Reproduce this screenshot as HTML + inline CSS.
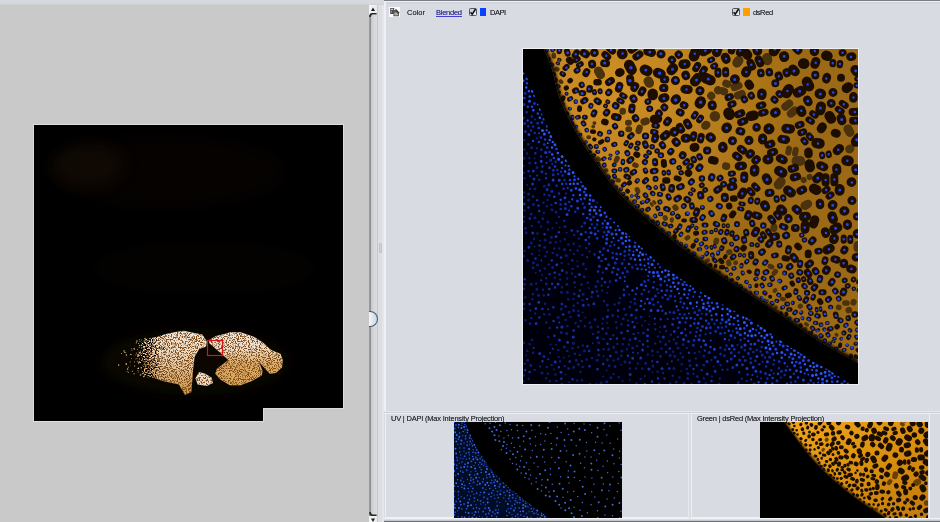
<!DOCTYPE html>
<html><head><meta charset="utf-8">
<style>
*{margin:0;padding:0;box-sizing:border-box}
html,body{width:940px;height:522px;overflow:hidden;background:#d8dbe2;font-family:"Liberation Sans",sans-serif}
.a{position:absolute}
svg{display:block}
#left{left:0;top:0;width:369px;height:522px;background:#c9c9c9}
#ltop{left:0;top:0;width:369px;height:6px;background:linear-gradient(#d6d9e0 0,#d6d9e0 3px,#d0d1d4 4px,#c9c9c9 6px)}
#ov{left:34px;top:125px;width:309px;height:296px;background:#000;box-shadow:0 0 0 1px #dcdcdc}
#notch{left:264px;top:409px;width:80px;height:13px;background:#c9c9c9}
#sb{left:369px;top:0;width:9px;height:522px;background:#d4d5d8}
#rp{left:384px;top:0;width:556px;height:522px;background:#d8dbe2}
.t{position:absolute;font-size:7.5px;color:#2c2c34;white-space:nowrap;line-height:1;text-shadow:0 0 .25px #666;will-change:transform}
</style></head><body>
<div class="a" id="left"></div>
<div class="a" id="ov"><svg width="309" height="296" viewBox="0 0 309 296" style="position:absolute;left:0;top:0">
<defs>
<linearGradient id="lg" gradientUnits="userSpaceOnUse" x1="94" y1="0" x2="138" y2="0"><stop offset="0" stop-color="#000"/><stop offset="1" stop-color="#fff"/></linearGradient>
<filter id="thr" x="0" y="0" width="1" height="1" color-interpolation-filters="sRGB"><feTurbulence type="fractalNoise" baseFrequency="0.85" numOctaves="1" seed="2" result="n"/><feColorMatrix in="n" type="matrix" values="1 0 0 0 0 1 0 0 0 0 1 0 0 0 0 0 0 0 0 1" result="g"/><feComposite in="SourceGraphic" in2="g" operator="arithmetic" k1="0" k2="1" k3="1.6" k4="-0.8" result="s"/><feComponentTransfer in="s"><feFuncR type="linear" slope="5" intercept="-2"/><feFuncG type="linear" slope="5" intercept="-2"/><feFuncB type="linear" slope="5" intercept="-2"/></feComponentTransfer></filter>
<linearGradient id="cg" gradientUnits="userSpaceOnUse" x1="0" y1="206" x2="0" y2="265"><stop offset="0" stop-color="#f6ece2"/><stop offset=".45" stop-color="#ead6bc"/><stop offset="1" stop-color="#d09a50"/></linearGradient>
<linearGradient id="rg" gradientUnits="userSpaceOnUse" x1="0" y1="206" x2="0" y2="261"><stop offset="0" stop-color="#f6ece6"/><stop offset=".35" stop-color="#ecdcc8"/><stop offset=".6" stop-color="#dcac68"/><stop offset="1" stop-color="#d8a860"/></linearGradient>
<filter id="b2" x="-.2" y="-.5" width="1.4" height="2"><feGaussianBlur stdDeviation="8"/></filter>
<filter id="spk" x="0" y="0" width="1" height="1" color-interpolation-filters="sRGB">
<feTurbulence type="fractalNoise" baseFrequency="1.1" numOctaves="1" seed="5" result="n"/>
<feColorMatrix in="n" type="matrix" values="0 0 0 0 0.5 0 0 0 0 0.3 0 0 0 0 0.1 -8 0 0 0 4.2" result="c"/>
<feComposite in="c" in2="SourceAlpha" operator="in" result="d"/>
<feMerge><feMergeNode in="SourceGraphic"/><feMergeNode in="d"/></feMerge>
<feGaussianBlur stdDeviation=".4"/>
</filter>
<filter id="b6"><feGaussianBlur stdDeviation=".45"/></filter>
<mask id="fm" maskUnits="userSpaceOnUse" x="0" y="0" width="309" height="296"><rect width="309" height="296" fill="url(#lg)" filter="url(#thr)"/></mask>
</defs>
<ellipse cx="131" cy="47" rx="120" ry="36" fill="#1a1006" opacity=".22" filter="url(#b2)"/>
<ellipse cx="54" cy="40" rx="36" ry="22" fill="#2a1a08" opacity=".28" filter="url(#b2)"/>
<ellipse cx="171" cy="143" rx="110" ry="24" fill="#140c04" opacity=".22" filter="url(#b2)"/>
<ellipse cx="161" cy="237" rx="95" ry="34" fill="#140b03" opacity=".5" filter="url(#b2)"/>
<g filter="url(#b6)" fill="none"><path d="M92 238.6h0M100.5 236.9h0M113.7 243.5h0M109.6 224.6h0M105.7 214.7h0M112.7 234.3h0M94.3 247.3h0M87.4 228.5h0M103.7 236.3h0M111.6 249.5h0M91.7 227.4h0M103.6 230.2h0M111.6 236.2h0M90.6 227.6h0M107 249.2h0M94.3 242.2h0M113.3 243.6h0M98.6 246.3h0M102.9 233.6h0M96.2 237h0M114.9 228.5h0M106.3 226.1h0M97.9 225.1h0M110.7 250.8h0" stroke="#d8b888" stroke-width="1" stroke-linecap="round"/><path d="M92.4 229.9h0M102.9 215.9h0M109.6 248h0M104.2 229.7h0M112.7 219h0M100.4 224h0M114.1 239.3h0M104 231.3h0M111 213.4h0M107.3 242.7h0M93.6 243.9h0M115.9 235.2h0M105.5 237h0M107.7 220.2h0M90.1 226h0M111.4 243.7h0M111.8 240.1h0M111.5 241.1h0M96.9 229.5h0M110.4 222.1h0M105.3 227.8h0M106.2 227.5h0M104.6 237.9h0M92.4 239.3h0M84.6 240.1h0M109.8 222.6h0M105.6 220.4h0M109.8 251.6h0" stroke="#d8b888" stroke-width="1.5" stroke-linecap="round"/><path d="M103.4 230h0M113.9 252.6h0M97.6 233.5h0M102 229.2h0M113.6 215.6h0M109.2 216h0M115.3 239.5h0M106 249.9h0M105.7 216.3h0M93.2 246.6h0M110.8 245.8h0M114.4 234.4h0M114.3 217.4h0M104.8 246h0M115.6 236.3h0M112.1 233.7h0M105.3 233.5h0M110.5 236.9h0M107.4 215h0M110.6 226h0M109.8 226.1h0" stroke="#a87838" stroke-width="1" stroke-linecap="round"/><path d="M111.7 215.3h0M100.1 248.8h0M110.4 224.6h0M102.4 217.8h0M115 226.7h0M106 228.2h0M115.5 215.7h0M110.2 239.6h0M106.6 250.2h0M100.6 241.1h0" stroke="#a87838" stroke-width="1.5" stroke-linecap="round"/></g>
<g filter="url(#spk)">
<path d="M90 226 99 218 112 214 122 212 132 209 140.4 207.3 149.6 205.7 158 207.5 160.6 208 168.3 209.6 172.9 216.5 172 221.8 165.2 224.1 160.6 231.8 159 245.6 158 259 157.3 267 151 270 145 259.4 129.7 256.3 106.7 248.7 91.3 247Z" fill="url(#cg)" mask="url(#fm)"/>
<path d="M165.2 247.1 171.3 248.7 177.5 252.5 179 257.9 172.9 261 163.7 259.4 161.4 253.3Z" fill="#ecdcc8"/>
<path d="M175.2 215 182 211 191.3 208.8 195.9 207.3 206.6 207.3 220.4 211.9 229.6 218 235.8 224.1 238.8 225.7 246.5 228.7 248.8 234.9 248 242.5 241.9 247.9 235.8 248.7 232.7 245.6 225 237 228.5 245.5 228 250.2 217.3 256.3 206.6 260.2 195.9 260.2 186.7 254.8 181.3 248.7 182.8 244 194.3 234.9 188.2 229.5 175.2 218Z" fill="url(#rg)"/>
</g>
<rect x="173.5" y="215.5" width="15" height="15" fill="none" stroke="#d41818" stroke-width="1.2"/>
</svg></div>
<div class="a" id="notch"></div>
<div class="a" style="left:263px;top:408px;width:81px;height:1px;background:#dcdcdc"></div>
<div class="a" style="left:263px;top:408px;width:1px;height:14px;background:#dcdcdc"></div>
<!-- scrollbar -->
<div class="a" id="sb"></div>
<div class="a" style="left:369px;top:4px;width:2px;height:518px;background:linear-gradient(90deg,#a0a0a2,#8a8a8c)"></div>
<div class="a" style="left:371px;top:4px;width:6px;height:518px;background:linear-gradient(90deg,#c8c9cc,#d6d7da 50%,#dcdde0)"></div>
<div class="a" style="left:377px;top:0;width:1px;height:522px;background:#c6c8cd"></div>
<div class="a" style="left:369px;top:5px;width:8px;height:10px;background:linear-gradient(90deg,#f4f5f7,#e8eaec)"></div>
<svg class="a" style="left:369px;top:5px" width="8" height="10" viewBox="0 0 8 10"><path d="M2 6L4 2.4 6 6Z" fill="#1a1a1a"/></svg>
<svg class="a" style="left:369px;top:12px" width="8" height="5" viewBox="0 0 8 5"><path d="M0.3 5V3.2Q0.8 1 3 1H7.6V2.6H3.6Q2 2.8 1.8 5Z" fill="#262626"/></svg>
<svg class="a" style="left:369px;top:512px" width="8" height="5" viewBox="0 0 8 5"><path d="M0.3 0V1.8Q0.8 4 3 4H7.6V2.4H3.6Q2 2.2 1.8 0Z" fill="#262626"/></svg>
<div class="a" style="left:369px;top:516px;width:8px;height:6px;background:linear-gradient(90deg,#f4f5f7,#e8eaec)"></div>
<svg class="a" style="left:369px;top:516px" width="8" height="6" viewBox="0 0 8 6"><path d="M2 2.4L4 6 6 2.4Z" fill="#1a1a1a"/></svg>
<div class="a" id="ltop2" style="left:0;top:0;width:384px;height:5px;background:linear-gradient(#d6d9e0 0,#d6d9e0 3px,#d2d4d8 4px,#cfd0d2 5px)"></div>
<!-- splitter -->
<div class="a" style="left:378px;top:5px;width:4px;height:517px;background:#dcdee2"></div>
<div class="a" style="left:382px;top:5px;width:2px;height:517px;background:#e4e6ea"></div>
<div class="a" style="left:379px;top:243px;width:3px;height:10px;border-radius:2px;background:#d2d4d8;box-shadow:inset 0 0 0 1px #bfc2c8"></div>
<div class="a" style="left:369px;top:311px;width:9px;height:16px;border-radius:0 8px 8px 0;background:linear-gradient(90deg,#f2f7fc,#c4d6ea);border:1px solid #50566a;border-left:none"></div>
<!-- right panel -->
<div class="a" id="rp"></div>
<div class="a" style="left:384px;top:0;width:556px;height:1px;background:#7a7d85"></div>
<div class="a" style="left:384px;top:1px;width:556px;height:1px;background:#eef0f4"></div>
<div class="a" style="left:384px;top:2px;width:556px;height:2px;background:#d2d5db"></div>
<div class="a" style="left:384px;top:1px;width:2px;height:411px;background:#eef0f3"></div>
<!-- toolbar -->
<div class="a" style="left:389px;top:7px;width:11px;height:10px;background:#fbfbfb"></div>
<svg class="a" style="left:389px;top:7px" width="11" height="10" viewBox="0 0 11 10"><rect x="1.2" y="1" width="4" height="6" fill="#4a4a4a"/><rect x="2" y="1.8" width="2.2" height="1.2" fill="#d0d0d0"/><rect x="2" y="3.8" width="1" height="2" fill="#888"/><path d="M4.4 3H7.2L10 6V9.2H4.4Z" fill="#5a5a5a"/><path d="M5.4 5.6H7.4L9 7.2V8.2H5.4Z" fill="#b0b0b0"/><path d="M6.6 2.4L10.2 6.2" stroke="#2a2a2a" stroke-width="1.1"/></svg>
<div class="t" style="left:407px;top:9px">Color</div>
<div class="t" style="left:436px;top:9px;color:#3030c0;letter-spacing:-0.25px">Blended</div><div class="a" style="left:436px;top:15.5px;width:25.5px;height:1px;background:#4040c8"></div>
<div class="a" style="left:469px;top:8px;width:8px;height:8px;background:linear-gradient(135deg,#c4ccd8,#eef1f5);border:1px solid #4e5566;border-radius:1.5px"></div>
<svg class="a" style="left:469px;top:8px" width="8" height="8" viewBox="0 0 8 8"><path d="M1.6 4.2L3.2 6.2 6.6 1" stroke="#0a0a0a" stroke-width="1.5" fill="none"/></svg>
<div class="a" style="left:480px;top:8px;width:6px;height:8px;background:#0844ff"></div>
<div class="t" style="left:489.5px;top:9px;letter-spacing:-0.45px">DAPI</div>
<div class="a" style="left:732px;top:8px;width:8px;height:8px;background:linear-gradient(135deg,#c4ccd8,#eef1f5);border:1px solid #4e5566;border-radius:1.5px"></div>
<svg class="a" style="left:732px;top:8px" width="8" height="8" viewBox="0 0 8 8"><path d="M1.6 4.2L3.2 6.2 6.6 1" stroke="#0a0a0a" stroke-width="1.5" fill="none"/></svg>
<div class="a" style="left:743px;top:8px;width:7px;height:8px;background:#ffa000"></div>
<div class="t" style="left:752.5px;top:9px;letter-spacing:-0.4px">dsRed</div>
<!-- main image -->
<div class="a" style="left:522px;top:48px;width:337px;height:337px;background:#eef0f4"></div>
<div class="a" style="left:523px;top:49px"><svg width="335" height="335" viewBox="0 0 335 335">
<defs>
<radialGradient id="og" gradientUnits="userSpaceOnUse" cx="85" cy="40" r="200"><stop offset="0" stop-color="#d09020"/><stop offset=".4" stop-color="#c08420"/><stop offset="1" stop-color="#9c6a14"/></radialGradient>
<filter id="bl" x="0" y="0" width="1" height="1"><feGaussianBlur stdDeviation=".6"/></filter><filter id="bf"><feGaussianBlur stdDeviation="1.5"/></filter>
<clipPath id="oc"><path d="M21 0 22.4 3.4 24.5 8.1 26.8 13.8 29 20 30.8 26.7 32.5 34.2 34.4 42.1 37 50 40.3 58.1 44.2 66.4 48.5 74.8 53 83 57.9 91.1 63.1 99.2 68.5 107.2 74 115 79.4 122.7 84.9 130.3 90.7 137.8 97 145 104.2 152.2 112.2 159.3 120 166 127 172 132.9 177.2 138.2 181.7 142.9 185.6 147 189 149.5 191.1 150.8 192.2 152.6 193.7 157 197 165 202.9 175.5 210.6 186.7 218.8 197 226 205.9 232 214.4 237.4 222.7 242.7 231 248 239.3 253.5 247.6 259 255.8 264.5 264 270 271.9 275.5 279.6 281 287.5 286.5 296 292 306.2 298 317.5 304.4 327.8 310 335 314 335 0Z"/></clipPath>
<clipPath id="bc"><path d="M0 19 1.8 23.2 4.4 29.1 7.3 35.8 10 42 12.2 47.4 14.3 52.6 16.5 58 19 64 21.8 70.8 24.9 78.1 28.2 85.6 32 93 36.4 100.4 41.2 107.9 46.2 115.2 51 122 55.3 128.2 59.5 133.9 63.7 139.4 68 145 72.4 150.5 76.8 155.9 81.5 161.5 87 167.5 93.7 174.4 101.4 182 109.1 189.4 116 196 121.8 201.5 126.9 206.3 131.8 210.7 137 215 142.6 219.2 148.4 223.2 154.2 227.1 160 231 165.2 234.5 169.9 237.8 175.5 241.4 183 246 193.6 252 206.4 259 219.5 266.2 231 273 240.3 279.1 248.5 285 256.2 290.6 264 296 272.1 301 280.1 305.7 288 310.3 296 315 304.8 320.4 314 326.2 322.2 331.4 328 335 0 335Z"/></clipPath>
</defs>
<rect width="335" height="335" fill="#000"/>
<g filter="url(#bl)" fill="none">
<g clip-path="url(#bc)"><rect width="335" height="335" fill="#01020a"/><path d="M135 214.9h0M132 218.8h0M87.5 169.8h0M285.4 325.6h0M74.6 153.3h0M165.6 245.2h0M126.1 218.6h0M233.2 281h0M253.4 292.6h0M144.1 236.3h0M82 171.7h0M200 255.7h0M281.8 324.6h0M170.3 247.6h0M18.8 65.5h0M123.1 205.4h0M110.5 202.5h0M137 218.3h0" stroke="#1a40d8" stroke-width="2" stroke-linecap="round"/><path d="M125.2 210.3h0M171.7 243.1h0M235.5 291.6h0M146 231h0M11.2 46.7h0M106.4 201.3h0M262.1 305.7h0M83.4 167.8h0M11.5 54.5h0M61.2 142.9h0M179.1 250.9h0M164.4 248.9h0M213.4 279.6h0M46.9 131.1h0M256.8 295.8h0M226.8 270.6h0M19.1 73.5h0M57.9 150.2h0M273.2 313h0M30.9 109.1h0M142.4 227.8h0M95.1 177h0M112.3 193.5h0M46.4 120.7h0M117.5 215.8h0M309.1 332.7h0M61.6 149.6h0M14.8 64.4h0M186.2 257.1h0M211.5 262.1h0M236.1 283.9h0M23.7 81.2h0M239.2 293h0M24.1 77.2h0M303.5 319.9h0M321.5 332.2h0M221.2 279.3h0M210.6 275.3h0M266.3 308.3h0M250.4 296.7h0M68.6 157.9h0M9 57.8h0M130.7 227.2h0M3.9 34.3h0M33.4 100h0M215 271.9h0M277.7 318.6h0M131 211.4h0M235.2 276.5h0M45.8 116.9h0M324.7 334.7h0M125.4 214.5h0M79.7 174.5h0M170 239.7h0M20.6 70.3h0M147.6 237.8h0M163.6 235.9h0" stroke="#1a40d8" stroke-width="2.5" stroke-linecap="round"/><path d="M155.5 234.1h0M154 228.4h0M271.6 316.8h0M264.3 300.8h0M184.9 253.8h0M252.8 300.3h0M3.9 29.8h0M99.7 194.2h0M187 261.9h0M276.2 308.3h0M299.6 333.9h0M58.6 132.8h0M159.9 235.4h0M134.4 223.2h0M89 185h0M70.3 151.6h0M293.5 321.5h0M193.3 265.2h0M308.8 328.8h0M205.9 270.7h0M280.3 311.5h0M260.2 297h0M51.5 130.8h0M103.4 184.5h0M81.9 163.8h0M85.5 182.8h0M199.2 270.4h0M111.8 197.6h0M161.8 232.6h0M269.9 309.8h0M278.3 305.2h0M306.3 326h0M276.8 313.9h0M203.2 273.1h0M59.8 137.3h0M83.7 178.4h0M247.8 285h0M150.7 229.4h0M318.9 334.8h0M285.6 311.5h0" stroke="#1a40d8" stroke-width="3" stroke-linecap="round"/><path d="M90.6 188.9h0M24.8 94.2h0M156 244.5h0M173.7 257.5h0M189 253.8h0M42.4 116.4h0M268.5 299.2h0M188.6 266.4h0M215.4 275.9h0M176.5 247.8h0M141.6 232.2h0M289.1 321.1h0M91.2 173.5h0M38.9 119h0M95.5 191.6h0M121.6 216.5h0M51.4 127.2h0M167.4 236.9h0M106.7 187.3h0M0.5 24.4h0M92.7 181.3h0M158.2 230.5h0M14.8 55.6h0M121.4 210.5h0M103 198.1h0M245.8 295.8h0M311.8 327.2h0M123 220.8h0" stroke="#2a58f8" stroke-width="2" stroke-linecap="round"/><path d="M26.7 91h0M29.2 105.5h0M199.5 260.1h0M290.3 314.1h0M232.3 286.2h0M204.7 265.2h0M3.3 38.4h0M194.7 258.1h0M117.1 211h0M298.3 318.1h0M302.4 327.2h0M96.4 181h0M29.7 93h0M277.8 322.8h0M248.9 288.2h0M199.1 266.4h0M55.5 129.7h0M295.4 329.4h0M10.3 61.3h0M6.7 47.6h0M110.2 206.1h0M194 254.6h0M221.9 284.3h0M42.1 122.4h0M115.8 206.7h0M287.3 316.9h0M118.9 199.2h0M150.3 233.8h0M161.5 240.3h0M178.1 243.2h0M314.4 332.4h0M93.3 185.3h0M103.3 188.1h0M214.7 266.7h0M47.2 135.1h0M74.6 171.2h0M271.8 305.9h0M76.7 161.4h0M112 210.4h0M67.2 146.5h0M206.7 275.1h0M16.8 68.7h0M173.9 253.5h0M220.1 268.6h0M211.3 269.1h0M269.1 313.6h0M106.6 197.5h0M113.9 201.1h0M72.7 158h0M315.6 327.4h0M241.6 288.7h0M56.9 146h0M17 60.5h0M66.5 154.8h0M258.7 308.7h0M151.7 237.7h0M254.1 303.9h0M126.4 222.9h0M290.8 317.9h0M223.9 276.4h0M139.1 222.9h0M182.2 247h0M145.8 222h0M29 98.6h0M225 286.4h0M87.6 178.4h0M281.9 315.3h0M67 150.8h0M34.9 104h0M142.4 221.5h0M117.2 203.4h0M154.6 239.9h0M78 157.8h0M229.9 280h0M54.6 134.8h0M52.9 139.5h0M204.4 259.9h0M106.4 191.5h0M50.8 134.8h0M0.3 31.7h0M161.3 245.5h0M26.3 83.6h0M166.6 241.2h0M238.5 287.1h0M5.9 42.3h0M102.8 192h0M38.8 113.4h0M115.9 197.6h0M73.2 164.5h0M183.6 260.3h0M180.6 254.8h0M207.9 267.8h0" stroke="#2a58f8" stroke-width="2.5" stroke-linecap="round"/><path d="M45.8 124.8h0M167.4 254.2h0M21.4 84.9h0M293.2 325.8h0M302.1 323.2h0M268.1 304.9h0M298.1 324.5h0M294 316.7h0M217.2 279.7h0M63.1 146.1h0M129.1 215.4h0M244 286.1h0M9.4 42.3h0M245.1 292.1h0M303.9 332.1h0M180.2 258.5h0M227 282.1h0M190.4 259.6h0M137.7 230.1h0M28 87.4h0M185.9 248.9h0M19.5 81.5h0M221.4 273.6h0M77.8 166.1h0M264.8 296.6h0M39.2 107.6h0M6.5 52.3h0M32 95.7h0M242.9 298.8h0M281.3 308.1h0M241.7 281.4h0M99.6 184.3h0M207 261.9h0M35.6 110.2h0M258.9 303.6h0M67 161.2h0M56.7 140.8h0M145.5 225.7h0M43.2 111.6h0M247 299.9h0M84.8 174.6h0M127.9 207.9h0M135.5 226.7h0M98.4 188.9h0M223.7 269.2h0M130.5 223.5h0M228.4 273.9h0M119.7 205.6h0M299.5 330.3h0M271.5 301.3h0M309.6 324h0M150.4 225.7h0M284 320.7h0M228.7 286.7h0M289.5 326.4h0M257.6 292.5h0M306.5 322.1h0M275.5 303.3h0M62.5 139.5h0M71.4 161.3h0M249 293.4h0M50.1 123.5h0M238.1 279.3h0" stroke="#2a58f8" stroke-width="3" stroke-linecap="round"/><path d="M234.4 327.5h0M113 215.9h0M257.7 328.6h0M182.5 285.2h0M238.2 329.5h0M209.7 282h0M239.6 312.8h0M214.6 296h0M43 144.5h0M206.1 291h0M79.6 178.5h0M144.7 270.1h0M14 89.4h0M11.8 70.4h0M101.2 210.8h0M106 245.6h0M264.3 317.4h0M23.8 107.9h0M14 99.2h0M29.3 114.9h0M135.4 244h0M178.8 264.7h0M66.6 202.4h0M250.7 324.6h0" stroke="#102ca0" stroke-width="2" stroke-linecap="round"/><path d="M75.2 182h0M8.1 81.6h0M139.5 248.5h0M150.4 270h0M233.7 301.1h0M40.6 139.7h0M221.7 289.4h0M3.6 63.3h0M81.1 183.3h0M59.8 154.8h0M78.5 212.1h0M112.9 245h0M89.6 203.9h0M232.4 311.7h0M250.6 315.4h0M37.7 159.9h0M203 277.4h0M187.3 284.1h0M8.9 67.5h0M80.7 199.5h0M87.3 196.9h0M242.2 308.5h0M134.3 240.2h0M202.1 300.7h0M33.6 136.8h0M156.8 265.2h0M197.5 304.9h0M244.3 329.4h0M272.4 332.5h0M162.9 286.4h0M36 144.5h0M80.1 187.7h0M224.6 325.4h0M111.7 249.9h0M54.7 182.2h0M146.8 263.3h0M52.3 162.8h0M106 205.6h0M248.2 321.3h0M171.8 269.9h0M134.9 253.2h0M34.3 121h0M23 129.3h0M18.3 100.7h0M154.8 269h0M19.5 117.5h0M243.2 317.4h0M130.6 255.8h0M102.1 219.1h0M121.1 241.1h0M118.7 220.2h0M137.7 270.2h0M167.4 283.6h0M131 232.9h0M217.7 291.1h0M216.2 323.3h0M8.6 98.7h0M201.4 306.8h0M255.8 319.2h0M238.7 297.9h0M18.1 107.6h0M118.8 245.1h0M261.7 325.9h0M159.8 258.3h0M125.4 231.2h0M236.3 315.3h0M5.3 77.3h0M162.5 273.6h0M290.7 334.2h0M71.6 205.4h0M62.6 183.3h0M70.6 167.9h0M109.3 218.6h0M100.9 240.8h0M139.4 261.7h0M155.2 261.3h0M198.9 278.5h0M12.4 104.2h0M215.8 303.4h0M151.8 247.4h0M125.8 242.8h0M39.5 126.6h0M203.5 296.6h0M176.9 286.4h0M220.3 307.8h0M66.1 194.7h0M227.7 309.4h0M11.7 83.9h0M101.9 227.9h0M88.7 192.9h0M32.6 112.8h0M37.6 155.4h0M66 188.3h0M155.4 278.8h0M35.1 124.9h0M230.3 302.9h0M267.9 333.4h0M201.9 283.9h0M211.9 288.8h0M161.7 265.5h0M197.4 298.7h0M41.5 130.9h0M174.4 279h0M181.8 301.6h0M46.2 153.1h0M270.8 324.8h0M10 77.4h0M170.2 259.3h0M43.2 134.8h0M74.1 175.5h0M285.4 334.8h0M101.7 206.8h0M221.8 301.3h0M38.1 122.7h0M197.7 274.3h0M237.6 302.4h0" stroke="#102ca0" stroke-width="2.5" stroke-linecap="round"/><path d="M256.1 312.6h0M71.9 178.9h0M171.7 263.4h0M157.9 249.2h0M129.5 250.2h0M208.3 310h0M2.4 82.4h0M61.8 173.9h0M1.6 74.5h0M2.2 44.2h0M227.8 313.8h0M170.3 296.2h0M216.6 310.9h0M254 331.7h0M209.8 318.5h0M227.3 299.8h0M244.2 303.2h0M85.6 215.7h0M239.2 306h0M25.8 135.7h0M92.3 213.9h0M177.9 269.4h0M192.7 282.2h0M0.3 69h0M186.2 303.4h0M222.2 311.4h0M137.8 236h0M24.2 98.5h0M262.9 321.2h0M141.7 277.4h0M21.3 95.4h0M246.6 308.3h0M99.7 224.1h0M132.4 247h0M225.5 304.6h0M242.5 324.5h0M18.9 122.7h0M187.4 278.5h0M89.7 208.7h0M101.9 202.3h0M183.4 265.2h0M74.1 189.2h0M192.2 308.3h0M185.7 274.6h0M30.2 125.7h0M171 291.3h0M95.1 220.2h0M28.9 142.2h0M99.1 214.5h0M218.6 297.9h0M151 263.5h0M42.4 155.1h0M147.6 247h0M61.6 158.5h0M144.9 250.1h0M237.8 322.7h0M30.3 121.3h0M121.6 232.6h0M14.7 74.3h0M258.5 322.3h0M143.8 241.6h0M197.5 284.5h0M107.9 209.4h0M176.3 261.3h0M26.5 102.9h0M211.3 300.3h0M104.3 222.4h0M208.2 303.8h0M219.5 315.7h0M27.7 111.2h0M89.4 223.3h0M42.4 159.4h0M1.2 55.6h0M8.3 73.4h0M93.7 204.8h0M17.9 88.5h0M97.2 228.8h0" stroke="#102ca0" stroke-width="3" stroke-linecap="round"/><path d="M23.5 113.8h0M166 264.4h0M228.1 330.5h0M121.1 260.2h0M23 124.7h0M101.7 232.3h0M79.6 206.1h0M162.3 280.2h0M172.7 287.3h0M131.8 269.4h0M58.7 177.6h0M251.3 311.3h0M187.7 291.5h0M16 84.3h0M46.1 161.6h0M178.1 297.8h0M91.4 195.9h0M191.4 274.7h0M152.3 252.1h0M44.8 139.1h0M173.4 283.1h0M229.4 326.1h0M68.9 175.3h0M295.1 333.4h0M157.5 253h0M122 254.4h0M125.1 227h0" stroke="#1a3ec8" stroke-width="2" stroke-linecap="round"/><path d="M31.3 147.7h0M287.6 331.6h0M39.2 135h0M4.8 57.7h0M66.8 165.2h0M15.7 78.9h0M66.7 178.9h0M95.6 198.9h0M106 215.1h0M32.7 154h0M90.6 219.1h0M4.6 71.4h0M193.7 271.2h0M249.6 328.9h0M37.7 150.8h0M165.5 292.4h0M93 231.6h0M261.7 314.3h0M137.9 257.4h0M122.8 237h0M149.5 275.5h0M60.2 165.1h0M153.6 257.4h0M275.1 328.4h0M124.4 250.1h0M235.6 333.3h0M49.2 150.2h0M50.4 146.3h0M97.5 204.9h0M94.1 225.4h0M171.2 274.6h0M148.2 241.9h0M161.1 254.6h0M117.7 257.1h0M62.8 191.1h0M114 239.2h0M151.3 282.5h0M130.2 238.6h0M211.7 306.9h0M206.2 300h0M142.4 246h0M93.7 210h0M225.3 292h0M104.4 237.6h0M15.9 93h0M76.9 202.8h0M1.4 49h0M167.6 276.8h0M204.3 312.2h0M48.4 157.2h0M174.6 266.1h0M164.3 259.3h0M10.1 92.1h0M26.5 118.8h0M163.6 269.2h0M22.1 90.6h0M179.5 277.5h0M183.1 271.8h0M109.5 241.4h0M138.8 241.7h0M267 320.7h0M142.7 264.5h0M195.2 278.6h0M118.2 252.1h0M85 201.6h0M249.2 334.6h0M82.7 210.1h0M187.5 297.9h0M201.9 289.9h0M242.8 333.9h0M227.9 295.3h0M177.7 281.6h0M255 324.8h0M32 117.6h0M64.1 169h0M246.6 325.9h0M205.8 281.7h0M114.5 219.7h0M264 334.7h0M83.7 186h0M167.8 269.1h0M188.9 270.5h0M159.5 268.9h0" stroke="#1a3ec8" stroke-width="2.5" stroke-linecap="round"/><path d="M30.2 130.9h0M232.9 322.2h0M194.8 312.6h0M222 295.9h0M128.1 261.4h0M182.7 295.8h0M83.8 189.9h0M83.3 219.5h0M41.9 148.8h0M36.3 131.3h0M156.6 273.3h0M223.9 319.4h0M267.5 328h0M244.4 312.7h0M175.3 274.2h0M213.8 316.1h0M75.8 208.4h0M67.7 170.8h0M68.1 183.8h0M72.1 184.9h0M280.4 330.9h0M249.8 305.1h0M183.4 279.1h0M273.4 321.7h0M83.4 194.2h0M134.9 261.6h0M233.9 307.4h0M214.3 283.4h0M160.5 290.5h0M191.4 300.2h0M54.8 159.3h0M176.1 290.8h0M48.3 141.2h0M126.6 254.1h0M54.4 151.9h0M5.9 85.4h0M118.5 235.8h0M231.7 294.9h0M44.1 165.5h0M18.2 112.2h0M22.7 103.4h0M58.2 185.2h0M207.9 286.4h0M180.7 291.8h0M158.6 284h0M209.2 296.8h0M230.3 318.3h0M217.3 285.7h0" stroke="#1a3ec8" stroke-width="3" stroke-linecap="round"/><path d="M52.2 238.2h0M17.1 191.8h0M122 327.1h0M189 327.3h0M37.4 192.2h0M11.7 197.5h0M16.5 201.6h0M106.8 331.1h0M54.3 212.3h0M65.8 239.1h0M42.3 325.5h0M43.7 183.4h0M83.6 321.4h0M46 333.3h0M122.1 271.9h0M126.2 275.4h0M4.1 136h0M12.7 224h0M126.6 267.2h0M80.5 307.1h0M158.3 322.3h0M16.3 206.2h0M129.5 323.3h0M46.2 307.2h0M136.8 283.1h0M45.4 214.9h0M19.2 226.1h0M40.7 308.6h0M33.4 174.1h0M84.1 273.8h0M168.5 334.6h0M129.6 306.5h0M33 295.8h0M59.6 263.6h0M27.6 295.5h0M85 279.1h0M99.6 332h0M36.7 178.4h0M69.7 294h0M3.3 306.3h0M29.5 178.9h0M11.7 109.5h0M62.5 268.5h0M119.1 276.5h0M30.9 320.6h0M84 243.8h0M80.2 327.5h0M137.1 278.1h0M190.6 317.4h0M114.3 273.8h0M98.3 315.8h0M79.2 274.5h0" stroke="#0a1e70" stroke-width="2" stroke-linecap="round"/><path d="M204.5 320.5h0M132.2 294.4h0M119.3 319.6h0M157.6 304.2h0M20.7 246.5h0M49.5 299.3h0M155.1 310.7h0M154.8 288.1h0M156.5 328.4h0M93 273.1h0M98.4 275.2h0M74.9 277.7h0M25 180.6h0M99.7 295.2h0M61.8 277.2h0M218.8 329.7h0M90.2 286.3h0M79.9 223.5h0M94.3 294.9h0M91.6 255.5h0M55.4 261.9h0M50.9 256.7h0M147.2 334.5h0M42.6 271.1h0M158.7 315.2h0M97.1 248.9h0M1.7 202.1h0M35.3 301.1h0M44.1 229.4h0M197.5 316.2h0M22.4 207.3h0M22.1 254.8h0M80.5 290h0M113.9 296.9h0M38.6 214h0M1.2 91h0M21.7 219.6h0M116.7 291.9h0M106 295.5h0M50.7 194.7h0M28.6 315.9h0M9.4 250.3h0M2.6 271.3h0M176.4 302.7h0M140.1 324.1h0M90.5 324.9h0M52.6 273.9h0M95 267.4h0M196.8 329.4h0M26.6 279.1h0M79.1 241.6h0M11.6 321h0M59.4 205.8h0M23.8 318.1h0M62.9 219.9h0M54.7 217.5h0M1 293.8h0M38.8 334.9h0M10 303.8h0M9 291.1h0M18.1 177.6h0M146.1 292.3h0M85.2 237.9h0M138.4 299.6h0M36.1 199.4h0M172.9 309.6h0M50.4 250.1h0M85.2 261.3h0M1.6 129.2h0M58.5 235.5h0M70.1 284.9h0M44.2 302h0M31.2 199.5h0M4 104.4h0M20 240.7h0M9.9 245.2h0M26.6 265.5h0M64.7 233.8h0M188.4 310.9h0M24 203h0M26.8 332.3h0M80 269.7h0M93.7 278.8h0M105.1 271.5h0M9.1 205h0M51 205.1h0M20.9 163.8h0M0.8 123.8h0M115.3 284h0M32.4 325.4h0M149.7 326.8h0M35.5 308h0M45.2 250.5h0M143 282h0M23.1 229.3h0M5.6 329.8h0M170.6 324.7h0M63.5 310.6h0M0.2 332h0M45.4 195.5h0M11 189.8h0M113.1 319.5h0M147.9 285.8h0M51.2 186.1h0M0.9 172.6h0M1.4 167.7h0M31.8 228.7h0M59.7 318.1h0M54.3 331.4h0M27.1 304h0M41.7 316.9h0M63.2 198.9h0M57.8 271.9h0M66.8 273.7h0M1.2 143.4h0M12.1 264.5h0M55.2 298.2h0M55.8 189.5h0M180.8 329.3h0M56.6 197.2h0M144.4 314.8h0M47.3 201.3h0M57.6 322.8h0M124.7 305.6h0M23.2 273.5h0M137.3 292.7h0M0.5 116.9h0M49 224.5h0M33.4 331.9h0M4.3 301.7h0M41.8 190.2h0M95.6 328.2h0M51.9 304.8h0M44.5 277.2h0M13.2 234.5h0M24.8 324.6h0M8.9 176.9h0M8.3 268.9h0M56.8 306.1h0M47.6 268.1h0M1.1 239.8h0M114.9 314.6h0M223.7 332h0M49.6 219.8h0M115 304.2h0M131.8 275h0M107.7 252.9h0M23.8 157.2h0M14.5 184.5h0M2.2 248.5h0M54.6 201.5h0M59 331.3h0M21.2 265.2h0M1.4 100.5h0M1.2 259.7h0M98.3 306.7h0M6.4 109h0M37.2 230.5h0M113.5 334.5h0M182.8 334.3h0M69 309h0M150.8 290.4h0M54.7 254h0M52.3 227.8h0M28.4 155.9h0M59.5 251.2h0M37.1 312.3h0M104 300.2h0M163.7 299.1h0M150.2 302.7h0M171.7 304.1h0M134.6 303h0M80.6 300.2h0M24.6 150.9h0M66.8 335h0M25.8 215.6h0M17.2 317.5h0M29.7 204h0M73.5 335h0M106.9 319.4h0M136.3 334.4h0M1.5 161.4h0M20.4 153.8h0M39 238.2h0M32.9 193.3h0M124.9 297.6h0M134.9 287.6h0M163.8 319.9h0M132.3 280.3h0M117.6 329.9h0M81 252.1h0M159.9 308.3h0M6.7 295.3h0M59.8 296.6h0M0.9 207h0M68.7 247.7h0M90.8 311.6h0M58.9 312.2h0M1.3 326.4h0M23.2 329.3h0M25.3 287.9h0M134.5 322.8h0" stroke="#0a1e70" stroke-width="2.5" stroke-linecap="round"/><path d="M43.8 284.5h0M112.9 268.9h0M180.8 306.9h0M19.8 169.8h0M65.6 255.9h0M6.7 114h0M161.1 334.3h0M34.1 206h0M122.6 314.2h0M150.9 319.5h0M26.2 146.2h0M22.2 191h0M43.2 206.5h0M178.7 321h0M78 333.9h0M10.1 147.6h0M83.7 332.7h0M38.3 283.6h0M93.2 303.2h0M85.8 300.2h0M5.6 151.1h0M75.8 306.1h0M2.4 179.2h0M153.3 333h0M19.1 323.9h0M112 254.6h0M41.5 200.5h0M166.5 311.7h0M137.5 307.3h0M11.9 139.7h0M101.2 260.1h0M8.2 164.9h0M10.4 155.4h0M129.4 301.7h0M120.4 284.1h0M95.2 310.1h0M41.3 298h0M50.7 318.2h0M106.6 313.6h0M84.3 255.9h0M53.3 311.3h0M102.7 265.7h0M98.9 301.9h0M24.8 173.1h0M74.9 247h0M49.3 211.2h0M51.4 233.5h0M42.7 257.5h0M29 160.8h0M96.1 254.1h0M28.4 188.3h0M68.1 278.3h0M102 312.9h0M10.4 213.8h0M29.7 218.5h0M106.9 290.7h0M5.6 145h0M153.4 294.2h0M5.4 95.3h0M129.8 317h0M89.8 266.5h0M23.4 234.7h0M164.7 329.5h0M12 168.7h0M100.3 269.8h0M27.3 193.6h0M141.6 329.4h0M21.3 136.9h0M13.9 240.3h0M3.2 183.7h0M44.4 243.3h0M8.3 235.3h0M26.5 225.1h0M46.1 263.2h0M60.2 245.3h0M4.7 211.5h0M14.5 216.1h0M72.8 237.5h0M15.8 173.1h0M36.4 225.4h0M72 270.6h0M61.3 227.7h0M57 241.6h0M60.3 214.9h0M74.2 311.2h0M100.9 289.4h0M142.7 295.5h0M55.5 277.6h0M43.9 235.3h0M16.3 130.8h0M83.2 284.5h0M38.5 243.3h0M4.7 311.2h0M8.3 194.1h0M118.2 268.1h0M92.1 317.6h0M75.3 283h0M41.9 177.6h0M167.1 316.5h0M155 299h0M38.2 260.1h0M75.7 293.7h0M51.3 245h0M86.3 316.7h0M43.6 223.4h0M61.4 302h0M106.8 258.1h0M74.8 232.4h0M1.2 255h0M174.4 327.4h0M151.8 307.3h0M87.8 328.7h0M0.6 148.3h0M160.1 295.4h0M35.2 268.6h0M50.5 294.2h0M195.9 334.9h0M87 232.6h0M1.1 109.3h0M50.5 261.6h0M10.2 218.7h0M90.6 298.2h0M74 242.2h0M21.6 198.3h0M13.9 118.4h0M45.8 319.4h0M164.8 324.6h0M180.7 315.9h0M84.4 310.7h0M15.5 246.2h0M7.7 316.4h0M55.4 315.5h0M215.2 333.4h0M7 274.4h0M109.6 298.9h0M1.5 235.2h0M33.1 163h0M147.2 306.5h0M105.2 276.2h0" stroke="#0a1e70" stroke-width="3" stroke-linecap="round"/><path d="M10.7 298.9h0M36.3 273.6h0M78.6 236.8h0M110.7 285.1h0M199.6 320.7h0M25.2 310.3h0M36 168.1h0M110.1 303.6h0M18.4 211.6h0M129.2 312.2h0M21.3 145.6h0M18.2 231.3h0M1.7 314.7h0M7.4 261.5h0M29.8 299.8h0M7.1 127.1h0M41.3 171.8h0M64.2 208.3h0M14.2 126.4h0M148.9 312.2h0M25.2 260.2h0M16.9 221.7h0M6.9 140.1h0" stroke="#1430a8" stroke-width="2" stroke-linecap="round"/><path d="M66.5 317.2h0M146.7 299.5h0M74.4 320.2h0M29.1 234.7h0M31.4 286.7h0M146.3 319.5h0M46.7 312.5h0M30.6 271.9h0M15.5 156.6h0M21.6 185.2h0M79.7 279.7h0M34.1 278.5h0M38.8 254.9h0M28.8 211.6h0M12.5 114h0M14.1 151.2h0M104.7 282.1h0M64.4 297.2h0M188.6 331.9h0M16.1 161.9h0M165.9 303.7h0M80.2 315.1h0M50.7 281.5h0M40.2 265.4h0M35.8 183.3h0M84.5 294.8h0M32.1 238.5h0M1.7 230.2h0M2.1 321h0M124.5 291.9h0M134.3 313h0M5.4 158.5h0M5.5 122.3h0M6.8 169.5h0M143.2 303h0M87.3 306.9h0M30.3 258.2h0M128.9 332.5h0M66.2 301.9h0M79 229.7h0M75.3 301h0M120 295.4h0M98.4 283.8h0M19.4 260h0M25.3 245.7h0M173.8 316.3h0M16.5 196.4h0M6.7 255.1h0M38.3 329.8h0M64 249.9h0M49.5 330.2h0M109.6 272.9h0M21 307.6h0M121.9 334.9h0M26.3 240h0M135 329.2h0M6.6 322.9h0M82.1 233.2h0M104.9 306.8h0M16.4 268.5h0M87.6 290.1h0M35.9 318.3h0M93.9 289.5h0M12.4 209.6h0M55.7 266.6h0M38 208.5h0M124.9 280.8h0M31.8 223.7h0M95.1 261.6h0M48.7 181.5h0M170.5 320h0M19.4 312.2h0M231.2 334.9h0M75.1 222.4h0" stroke="#1430a8" stroke-width="2.5" stroke-linecap="round"/><path d="M38 323.2h0M111.4 278h0M69.4 243.2h0M119.5 301.1h0M13.1 274.4h0M9.8 184h0M109.6 309.2h0M33 187.6h0M55.8 247.1h0M33.8 215.8h0M35.1 235h0M11 130.1h0M39.2 221.4h0M70.9 254.7h0M74.5 288.7h0M15.8 253.2h0M32.2 312.9h0M107.2 325.5h0M36.4 290.9h0M176 332.7h0M16.7 304.5h0M113.5 261.1h0M12.9 259.5h0M50.3 288.1h0M108.5 266h0M117.7 309.1h0M9.6 135h0M1.2 154.9h0M5.9 198.2h0M192.1 322.3h0M139 319.5h0M60.3 256.2h0M76.3 217.2h0M84.4 267.7h0M44.7 293.3h0M56.4 225.5h0M184 312.6h0M38.9 278.1h0M140.4 287.9h0M125.9 319.9h0M112.4 289.6h0M184.2 325h0M10.3 121.9h0M124.5 286.8h0M101 246.1h0M24.2 140.4h0" stroke="#1430a8" stroke-width="3" stroke-linecap="round"/></g>
<g clip-path="url(#oc)"><rect width="335" height="335" fill="url(#og)"/><path d="M128.1 154.7l1.3 1.5M130.6 152.6l1.3 1.5" stroke="#4a3008" stroke-width="3" stroke-linecap="round"/><path d="M282.8 274.9l1.4 1M313.4 285.6l0.3 0.3M40.4 55l0 0.2M70.1 77.5l0.2 0.1M71.3 74l0.2 0.1M36.2 43l-0.1 0.2M253 258.1l-0.1 0.1M196.3 223.1l-0.7 0.1" stroke="#4a3008" stroke-width="3.5" stroke-linecap="round"/><path d="M185 211.3l-1 0.3M83 121l0.4 0.4M66 88.2l-0.6 0.1M282.3 279.8l-1 1.6M37.7 32.2l0.7 0.8M148.9 170.2l-0.1 1.5M252.3 241l-0.7 0.9M74.9 109.3l1.3 1.3" stroke="#4a3008" stroke-width="4" stroke-linecap="round"/><path d="M33.4 19.9l1 0.4M165.1 188.4l-1.4 0.9M94.5 131.1l1.1 0.3M30.7 5.7l0.2 1.8M259 249.8l1.7 0.5M212.8 213.7l-0.3 0.2" stroke="#4a3008" stroke-width="4.5" stroke-linecap="round"/><path d="M114.1 140.5l0.8 1.9M277.4 257.1l-0.2 0.2M111.7 115.9l1.5 0.6M205.6 212.9l0.4 2M247.1 217.2l1.8 0.8M142.1 168.5l0.3 0.9M252.6 222.4l-1.5 1.9M94.3 109.2l-1.1 2.3" stroke="#4a3008" stroke-width="5" stroke-linecap="round"/><path d="M321.9 253.9l2.1 0.1M315.5 258.4l0.4 0.1M152.1 158.2l0.8 1M193.5 191.3l-0.5 1.7M206.8 203.1l-1 0.1" stroke="#4a3008" stroke-width="5.5" stroke-linecap="round"/><path d="M105.9 73.7l-0.9 0M106.2 80.2l-0.9 0M280.6 130.9l0.1 0.2M286.6 127.9l0.1 0.2M266 99.6l-0.7 3.9M272.7 100.7l-0.7 3.9M330.7 252.9l-0.3 0.7" stroke="#4a3008" stroke-width="6" stroke-linecap="round"/><path d="M116.6 78.9l-0.9 3M99.7 62l0 0.4M326 261.1l-0.2 0.1" stroke="#4a3008" stroke-width="6.5" stroke-linecap="round"/><path d="M250.9 178.3l-0.1 1.1" stroke="#4a3008" stroke-width="7" stroke-linecap="round"/><path d="M199.8 42l1.6 0.7M203 34.4l1.6 0.7M123 72.2l-1.8 0.6M202.8 117.1l0.7 0.1" stroke="#4a3008" stroke-width="7.5" stroke-linecap="round"/><path d="M266.2 54.5l-3.9 3.2M271.8 61.4l-3.9 3.2M188.2 46.8l0.1 0.1M195.1 41.2l0.1 0.1M215.5 36.6l-4 1.5M218.8 44.9l-4 1.5" stroke="#4a3008" stroke-width="8" stroke-linecap="round"/><path d="M327.1 99.7l-0.6 0.4M284.9 154.9l-3.1 1.8M334.8 196.2l-0.1 2.8M183.2 75.9l-0.8 0.7" stroke="#4a3008" stroke-width="8.5" stroke-linecap="round"/><path d="M325 79.9l1.9 3.5M75.4 22l2.1 3.7" stroke="#4a3008" stroke-width="9" stroke-linecap="round"/><path d="M257.9 132.7l-2.4 3M125.3 32.1l1 1.9M215.7 11.5l-1.6 2.3" stroke="#4a3008" stroke-width="9.5" stroke-linecap="round"/><path d="M244.1 8.9l0.2 2.4M273.6 111.9l3.5 0" stroke="#4a3008" stroke-width="10" stroke-linecap="round"/><path d="M191.9 67.3l0 0" stroke="#4a3008" stroke-width="10.5" stroke-linecap="round"/><path d="M241.6 250.9l-0.3 0.9M244.4 251.7l-0.3 0.9" stroke="#1a1004" stroke-width="2.5" stroke-linecap="round"/><path d="M60.7 95.3l0.3 0.2M63 92.7l0.3 0.2M114 145.7l-1.2 0.8M115.8 148.3l-1.2 0.8M26.3 9.4l-0.2 1.2M86.3 109.6l0.9 0.2M87.1 106.1l0.9 0.2M309.7 292.2l1.4 0.5M310.8 289.2l1.4 0.5M238.5 248.4l0.1 0.4M258 263.8l0.3 0.9M222.7 240.8l-0.1 0" stroke="#1a1004" stroke-width="3" stroke-linecap="round"/><path d="M34.4 14.2l0.8 0.4M35.9 10.5l0.8 0.4M306.2 294.3l1.1 0.2M226.9 236.8l0.2 1M263.3 264.4l0.4 1.2M57.6 85.4l-0.2 0M278.7 263.1l-0.7 1M139.6 180.8l0.2 0.3M279.3 268.9l0.3 0.5M28.5 15.5l1 0.3M321.8 300.7l-1.3 0.3M203.3 228l0 1M318.4 289.5l-0.3 0.4M97.7 140.2l0.5 0.2M53.4 77.5l-0.1 0.2M266.8 269.4l-0.6 0.3M203.6 219.7l0.5 1.7M192.7 216.6l-0.2 1M188.2 197.8l0.5 1.3M191.6 196.6l0.5 1.3M46.5 59.5l0.7 0.3M165.4 201.4l-0.1 0.3M179.7 207.7l-0.3 0.5M108.8 146.9l-0.1 0.1M75.4 114.7l0.3 0.7M100.6 144.7l-0.3 0.9M207.5 225.2l0.8 0M93.5 137.9l0 0.1M293.5 259.7l0.4 2.2M297.4 259l0.4 2.2M227.2 243.4l0 0.1M295.3 280.9l-1.2 0.7M324.1 296.2l0.1 0M124.4 167.4l0.2 0M67 102.8l0 0M49.1 73.9l0.6 1.2M152.8 192.2l1.1 0.3" stroke="#1a1004" stroke-width="3.5" stroke-linecap="round"/><path d="M217 205.7l-0.1 0.5M221.2 206.2l-0.1 0.5M71.2 90.3l0.3 0.2M304.6 274l-0.6 0M195.3 203.3l-0.3 1.4M332.5 294.7l0.5 0.1M115 157l-1 0M177.2 200.2l-1.5 0.1M313.5 299.6l-0.7 0.2M208.9 230.9l0.1 0M253.4 251.7l1 0.3M74.2 102.8l1.1 0.1M103.8 149l-0.9 1.6M49.4 67.8l-0.2 1.7M233.6 229.6l-1.3 0.7M166.9 144.3l1.3 0.9M169.5 140.4l1.3 0.9M328 306.4l-0.2 1.6M81.5 109.3l-1.4 0.9M163.2 196.7l-0.4 0.5M219.6 223.5l0.2 1M223.2 232.8l0.6 0.3M248.8 253.8l0.8 1.1M232.8 243.6l1.1 0.2M67 96.7l1.1 1.5M32.9 30.9l-0.6 0.3M225.7 222.5l1.1 0.6M158.4 184.5l-0.9 1.5M157.9 194.8l0.1 0.1M71.2 106.3l-1.4 0.9M247.1 247.7l0.1 0M277.5 276.2l0.3 0.6M260.1 258.3l-1.1 0.3M132.1 166.7l0.3 0.6M183.3 197.9l0.4 0.5M329 299l-0.2 0M292.5 287.4l0.2 0.3M332.4 307.4l1.4 0.7M217.6 236.9l0.1 1.3M119.3 160.8l-0.5 0.4M162 171.4l-1.8 0M30.8 25.3l0 0.2M215 229.1l-0.2 0.2M85.2 127.3l0.5 0.5M301.3 280.3l0.2 0.1M269.8 253.7l-0.1 0.4M291.9 273.7l1.4 0.3M169.4 176.4l-0.3 0.4M173.4 178.8l-0.3 0.4M89.5 132.4l0.5 0.2M213.2 234.8l0 0.3M218.6 215.7l-0.2 1.9M333.1 287.5l0.8 1.3M173.8 191l-1 1M145.4 184.2l0.7 0.1M119.7 153.4l-1 0.2M317.2 295.5l-0.3 1.5M288.3 283.9l-1.5 0.3M30.6 0.4l-1.3 0.8M130 172.3l0.1 0.2M326.7 281l0.7 0.7M233.5 236.2l-0.2 0.8M200.6 176.3l0 1M204.8 176.3l0 1M35.7 37.2l-1.6 0.4M202.6 207.2l-0.8 1.4M44 64.2l0.2 0.8M43.6 44.8l-0.1 0M187.3 215.9l0.1 0.1" stroke="#1a1004" stroke-width="4" stroke-linecap="round"/><path d="M151.5 187.1l0.2 0.9M170.6 196.1l-0.9 1.3M63.7 81l0.1 0.2M125.2 151.2l-1.3 1.2M247.5 235.7l-1.1 0.1M301.8 291.6l0 0.4M211.3 219.3l-0.6 0.3M91.3 115.7l-0.2 0.3M47.9 49.4l-1.6 0.9M125.2 137.9l1.4 1.1M125.5 159.9l-1 0.7M140.8 123.2l0.1 1.5M145.6 122.8l0.1 1.5M181.6 190l1.4 0.1M285.5 269.8l0.8 0.3M52.7 52.4l0 0.4M100 112.1l-0.2 1.8M81.6 100.1l0.2 0.3M148.2 176.8l-1.3 0.4M188.4 182.9l0 0.1M192.8 181l0 0.1M255.4 245.8l0.7 0.3M55.6 68.1l-1.4 0.3M104.4 141.9l0.4 0.4M134.5 158.7l0.6 1.1M323.4 275.8l-1 0.8M289.2 278.8l1 1.1M122.5 106.8l1.2 0.9M125.5 103l1.2 0.9M216.3 159.6l2.9 0.7M217.6 154.6l2.9 0.7M301.5 263.8l0.5 2.1M178.9 194.6l-0.8 0.5M90.6 121.7l1.7 0M208.3 194.8l0.5 0.5M262.4 238.5l-1.7 0.8M304.6 285.1l0.7 1.2M134.6 173.5l0.3 1.1M330.8 239.7l0 0M335.7 241.2l0 0M94.5 103.6l-0.2 0.1M272.8 262.8l-1.3 1.4M256.6 231.8l0.4 0.4M157.2 176.7l-1 1.9M97.1 120.3l0 0.1M184.1 204.2l-0.6 0.8M170.7 204.7l0.5 0.1M326.2 287.3l-0.8 1.5M23.6 0.1l-0.1 1.4M114.6 131.3l-0.8 1M103.7 93.3l-1 1.8M108.3 95.8l-1 1.8M307.2 258l0.8 0.1M241.5 243.7l0.7 0.6M238.8 235.8l0.8 1.3M276 248.3l0.8 1.4M273 271l1.8 0.3M40.4 48.7l-0.7 1.7M189.3 205.6l0.2 0.7M182.4 183l-1.7 0.5M297.7 286.5l0.7 0.7M224.2 212.1l-0.9 1.1M101.7 134.9l-1.7 1.5M111.8 152.6l-0.5 0M82.3 56.9l0.4 0.2M84.6 52.7l0.4 0.2M140.8 174.6l1.8 0.7M91.2 126.7l0.5 1.1M153.6 181.2l-1.4 1.7M69.2 82.5l1.7 0.2M79.1 92.4l-1.9 1.1M81.3 115.7l0.1 0.8M191 210.5l1.5 1.5M267.4 260.4l-2 0M164.6 164.7l-0.6 0.1M298.1 275.7l-0.2 0.1M137.2 164.9l0.8 0M240 229.2l1.2 0.8M335.1 300.9l-0.3 0.2M200 218.2l-1.9 0M132.7 138.5l0.1 0.1M149.9 164.3l-0.8 0.1" stroke="#1a1004" stroke-width="4.5" stroke-linecap="round"/><path d="M321 283.8l-0.1 0.1M228.8 195.4l0 0.2M234.3 196l0 0.2M68 56.3l-0.3 1M293.8 266.6l1.6 0.6M61.4 68.3l0.9 0M197.6 211.3l1.2 1.5M106.6 133.7l-0.5 0.4M122.2 121.1l0.5 1.3M279 186l-0.4 0.2M281.7 190.9l-0.4 0.2M165.9 178.9l-1 2.3M180.9 176l2.2 0.1M47.5 31.4l-0.7 0.5M136.3 145.3l1.4 0.1M39 24.6l1.5 0.9M199 198.7l-0.4 0.9M314.4 277.5l-0.6 0.5M285.8 257.4l1.2 1.7M43.4 38.8l-0.3 0.2M136.9 152.9l0.1 0.2M198.2 182.3l-0.7 1.2M156.5 118.6l-0.5 0.2M158.4 123.6l-0.5 0.2M92 95.3l-1.4 0.3M275.2 230.6l0.2 1.1M280.5 229.6l0.2 1.1M179.4 158.4l0 0M122.1 145.8l0.8 1.1M308.1 279.6l-1.8 0.6M273 241.6l-0.3 1.9M334.6 281.1l0.1 0M290.6 247.4l-0.7 1.8M204.1 182.4l-0.4 1.7M209.2 183.7l-0.4 1.7M71.3 42.6l0.2 1.1M77 41.7l0.2 1.1M261.7 224l0 0.1M173.7 184.1l-1.1 0.2M248.7 228.8l0.7 1.5M113.4 99.2l0.8 0.2M114.5 94.1l0.8 0.2M269 234l0.6 1.2M73.3 97.5l-0.1 0M56.6 58.8l-0.1 1.8M86.3 83.1l0 0M243 212.8l-1.4 1.6M60.2 73.9l0.7 1.2M129.4 144.1l0.6 0.5M288.2 264.4l-0.7 0.1M263.8 255l0.7 0" stroke="#1a1004" stroke-width="5" stroke-linecap="round"/><path d="M281 236.7l1 0.9M325.2 268.9l0.1 0.6M103.2 127.3l2.4 0.9M180.1 167.9l-1.1 1.4M188 163.8l1.1 1.5M179 136.1l-0.4 0.3M182.4 140.8l-0.4 0.3M142.8 159.7l2.2 0.7M237 190.1l1.3 1.3M108.9 86l-2.1 1.9M161 156.8l-0.3 0.4M104.1 103.5l0.5 1.2M145.2 147.1l0.8 1.8M129.2 97.8l0 0M134.1 101.9l0 0M76.8 84.7l0.4 0.2M243.7 222.8l-1.4 0.7M210.7 207.4l-1.1 1.2M103.8 120.6l-0.9 0.3M266.1 246.2l-1.5 0.4M330.6 230.4l-0.1 0.3M336 232.7l-0.1 0.3M84.4 90.3l0 0.4M257.1 216.9l-0.4 0.1M43.9 17.6l-1.7 1.6M296.7 251.9l0.9 1.4M168.7 156l0.4 1.9M164.4 112l-2.2 1.8M168.2 116.5l-2.2 1.8M253.1 206.2l-2.4 0.4M36.5 0l-0.3 2.5M192.5 174.7l1.9 1M334.1 273.4l0.6 0.6M321.9 231.3l-0.4 0.2M324.9 236.8l-0.4 0.2M139.4 137l0.6 2.6M111.4 122.7l-2 1.2M154.8 167.5l0.2 0.2M312.6 265.2l0.5 2.1M315.6 249.4l0.3 0.4M153.4 129.1l2.5 0.8M96.1 51.1l2.8 1.6M99 46l2.8 1.6M234.3 222.1l-0.4 2.5M123.3 130.9l-1.7 1.7M233 212.2l-0.8 1.6M283.5 249.8l-1.3 2.2M54.9 10l-2.3 1.4M58 15l-2.3 1.4M239.6 185l1.6 2.7M244.8 181.8l1.6 2.7M317.1 271.2l0.7 0.3" stroke="#1a1004" stroke-width="5.5" stroke-linecap="round"/><path d="M187.5 149.8l-0.3 0.2M62.4 50.9l-2.2 1.4M210 124.5l-2.3 0.3M211 131.3l-2.3 0.3M210.3 164.5l-1.4 1.9M312.1 241.7l0.6 0.7M214 175l0 0.2M299 105.5l0.3 1.7M305.6 104.4l0.3 1.7M201.3 167.7l-0.9 2.5M220.9 189.6l0.3 2.3M320.7 188.6l0 3.2M327.3 188.7l0 3.2M122 94.4l0.9 2.6M261.5 209.1l2.5 0.6M132.5 129.8l0 0.1M132 112l0.2 2.3M53.2 41.3l-1.2 0.5M168.9 132.3l-1.1 1.2M229 173.6l0.5 1.6M122 112.8l-0.2 0.3M130 82.8l2.6 0.6M131.4 76.3l2.6 0.6M132.6 121.7l-2.9 0.6M195.8 156.8l1 0.6M58.6 35.7l0.2 0.4M227.9 150.7l-0.2 1.5M234.4 151.4l-0.2 1.5M201 191.2l0.5 1.3M113.3 105.3l1 0.6M140.8 113l0.2 2.9M223.1 182.8l0.3 1.6M256.2 194.5l0.1 1.3M228.1 205.1l0.2 2.3M54.6 21.1l-1 0.6M169.4 171l2.5 0.1M172.6 64.9l-1.8 2.6M178 68.7l-1.8 2.6M300.6 243.2l-2.3 0M306 249.9l-1 0.8M253.5 149.3l0.3 1.5M260.1 148.2l0.3 1.5M213.7 188.7l-1.2 0.5M71.4 63.3l-0.8 2.1M91.9 77l0.3 0.5M297.2 228.7l-0.6 2.5M213.7 199.9l-0.2 0.5M44 2.3l0.7 2.3M286.6 231.4l0.8 1.7M189.1 10.4l-2 1M192.2 16.5l-2 1M58.5 44.1l1.8 0.1M137.7 106.2l0.4 0M283.9 243.8l0.3 0M277.2 213.7l-0.4 2.6M220.9 198.8l-0.7 0.8M268.2 226.6l0.1 0.3M333.3 36.3l1.3 0.2M334.2 29.8l1.3 0.2M170.4 109.9l0.7 1.4M176.3 107.2l0.7 1.4M108.3 110.1l-1.9 1.7" stroke="#1a1004" stroke-width="6" stroke-linecap="round"/><path d="M53.7 3.6l-1.8 2.8M84.1 62.9l-1 1.3M296.5 202l-1.9 0.3M211.4 149.6l-1.3 0M259.2 177.2l2.9 1.1M276.5 223.3l0.5 0.1M125.2 52.5l-0.5 0.1M127 59.7l-0.5 0.1M239.6 202.6l-1.3 1M158.5 137.4l-2.2 0.8M315 60.1l3.5 2.4M319 54.1l3.5 2.4M285.6 70.6l3.1 1.9M289.4 64.5l3.1 1.9M142.4 131.4l1.7 0M226.5 141.4l2.7 2.8M231.5 136.7l2.7 2.8M292.1 237.6l-1.2 1.6M73.5 33.2l2.1 0M98.2 84.7l0 0M81.3 72.8l1.2 0.3M309.9 13.3l-0.2 1.8M317 14.2l-0.2 1.8M331.6 265.5l0.5 0M247.6 169.1l2.4 3.2M253.4 164.8l2.4 3.2M240.3 176.6l0 0M265.7 199.4l-0.6 2.8M314.3 225.6l0.5 0.1M155.7 148.8l-2 1.2M73.9 51.6l1.7 1.2M280.7 91.2l1.6 1.9M286.1 86.8l1.6 1.9M267.2 217.3l-1.2 0.8M302.3 210.6l-0.6 2.2M86.2 42.9l-0.8 1M150.1 112.3l-0.7 0.2M274.5 196.9l1.3 1.3M309.3 232.3l-1.3 1.9M197.3 129l-0.5 0.3M200.9 135.1l-0.5 0.3M148.2 102.1l-0.8 0.9M174.1 161.7l-1.1 3M163.7 150.1l1.3 0.9M304.3 140l-2.5 1.8M308.3 145.6l-2.5 1.8M66.7 39.2l-0.2 1.4M178.9 129.5l0 0.1M148.8 138.2l-0.3 2.3M139 95.5l1 1.6M206.1 156.8l0.1 0.3" stroke="#1a1004" stroke-width="6.5" stroke-linecap="round"/><path d="M174.7 16.3l-2 3.4M181.3 20.2l-2 3.4M287.5 214l-2.5 2M46.4 11.1l1.2 1.3M290 191l-1.5 1.8M246.9 193.7l-1.3 1.8M81.9 5.5l2.8 2.4M86.7 -0.3l2.8 2.4M92.4 56.5l0.7 0.4M278.1 75.3l-2.9 1M280.7 82.8l-2.9 1M239.9 55.8l-3.6 1.1M242.2 63.1l-3.6 1.1M177.6 145.4l0.2 1.7M285.2 204.1l0 1.6M88.4 31.5l-2.9 2M63.8 22.6l-1 2M196.2 139.7l-2.4 1.6M170.8 85.7l-0.8 3.5M178.3 87.4l-0.8 3.5M221.1 49.9l0.5 0.9M228 46.2l0.5 0.9M194.9 21.9l0.1 3.3M202.6 21.5l0.1 3.3M318.1 -3.6l-1.1 0.3M320.2 3.7l-1.1 0.3M109.1 58l-0.4 3.1M122.7 86.9l-0.3 0M176.9 118l-1 1.4M188.9 127.5l-0.5 1.6M320.8 242.1l-0.7 1.9M207.4 47.7l-2.3 0.9M210.1 54.7l-2.3 0.9M251 50.3l1 0.9M256.1 44.7l1 0.9M292.3 221.7l0.7 1M284.2 223.3l1.6 2.2M112.2 68.7l0.6 1.1" stroke="#1a1004" stroke-width="7" stroke-linecap="round"/><path d="M156.6 77.7l1.8 3.1M163.8 73.5l1.8 3.1M232.2 166.1l3.5 1M156.6 63.1l1.2 0.7M160.5 55.9l1.2 0.7M218.5 64l-3.7 1.5M221.6 71.8l-3.7 1.5M159.8 106l-0.3 0.5M237.8 23.6l0.1 1M246.3 22.7l0.1 1M80.9 14.2l2.4 0.2M270.2 207.7l1.8 2.4M321.7 200.4l-0.7 1.3M233.3 181.4l-1.6 3M110.2 49.1l0.6 1.2M111.8 -1.6l-3.5 2.5M116.7 5.3l-3.5 2.5M135.9 64.3l0.2 0.2M141.3 58.3l0.2 0.2M112.5 37l-1.4 2.3M119.7 41.3l-1.4 2.3M263.4 186.3l-0.7 0.3M212.8 106.4l2.9 2.1M217.6 99.6l2.9 2.1M91.7 67.7l3.2 0.7M96.6 36.7l-1 3.2M209.6 -2.5l-1.1 4.2M217.7 -0.3l-1.1 4.2M311.2 210l2.7 0.9M145.2 71.5l-1.3 1.9M225.6 164.9l-0.8 2.8M132.5 87.8l-0.7 2.6M165.4 124l0.1 0.1" stroke="#1a1004" stroke-width="7.5" stroke-linecap="round"/><path d="M227.5 13.8l1.6 3.8M235.6 10.5l1.6 3.8M152.6 92.5l1.1 1.3M140.1 39l1.3 0.1M141 30.4l1.3 0.1M303.8 220.4l-0.8 1.4M148.8 10.7l0.3 0.4M155.6 5.5l0.3 0.4M318 28.8l0 0M227.9 104.2l-1.4 1.3M233.8 110.3l-1.4 1.3M280.1 140.5l-2.7 1.4M143.6 85.3l-2.8 2.3M271.9 118.9l-3.3 0.9M274.1 127.5l-3.3 0.9M255.6 26.5l0.5 1.2M263.5 23.2l0.5 1.2M216.6 82l1.7 0.5M272.7 159.7l2.2 1.9M189 111l2.6 0.6M60.8 4l2.2 1.2M252.3 34.2l0 0M210.4 137.4l-2.8 0.6M248.4 94.7l-3.1 1M251.1 102.8l-3.1 1M69.1 14.7l0.1 0.8M334.3 62.7l-4.7 0.3M334.8 71.4l-4.7 0.3M184.3 101.4l-0.3 0M271.9 178.9l0.8 0M247.6 143.8l-1.9 0.2M334.6 167.5l-0.6 0M302.5 128.2l0.1 5.3M311.3 128l0.1 5.3M273.4 -0.2l1.9 1.6M221.3 126.5l-0.1 3.5M107.1 29.6l0.4 3.8M201.8 147.8l0.1 1.4M253 187.4l-2.6 0.6M292.3 25.7l0 0.7" stroke="#1a1004" stroke-width="8" stroke-linecap="round"/><path d="M97.4 23.3l-1.1 0.4M258.7 90.1l4.2 0.6M257.1 109.3l3.4 1.8M327.4 219.7l2.1 0.6M303.9 28.1l-0.6 2.1M329.2 7.5l-1.8 0.2M320.9 214l-0.1 1.1M137.8 5.1l0.5 0.1M302.1 182.5l0.7 2.3M330.4 47.2l0 2.4M296.9 153.9l0.2 2.2M312 84l1.6 0.5M284.2 50.8l1.2 2.2M233.6 78.2l0 0.2M162.5 25.8l0.5 1.1M71.5 3.8l-0.2 0M225.6 34.8l1.4 1.9M334 208l-1.1 0.3M219.8 116.8l-3.9 0.4M220.5 142.7l-2.2 3.3M297.4 116.4l3.7 1.7M285.4 102.8l0.1 2.3M332.5 119.3l0.5 2.6M265.4 169.3l0.1 0.7" stroke="#1a1004" stroke-width="8.5" stroke-linecap="round"/><path d="M243.2 128.8l1.5 2.7M296.2 127.5l-2.6 2.5M328.9 151.5l0.1 0.1M292.9 12.4l-1.1 2.9M324.4 174.9l0.1 1.5M202.3 8.2l0.9 2.2M310 43.4l0 0M241.5 155.7l1.2 2.3M177 41.5l-0.1 0.4M142 48.6l-2.3 0.7M291.8 170.8l-1.3 4.1M239.7 89l-0.2 2M313.6 119l0.3 2.9M161.9 40.2l3.3 0.3M209.4 91.7l0.1 0.1M172 98.3l-0.9 0.3M282.2 175.8l-0.2 4.5M316.6 99.4l-2.5 2.3M299.4 77.8l-1.2 2M307.3 199.3l-3.4 1.8M124.8 2.3l3.7 1.2M134.7 69.8l-3.5 0.4M225.9 91.3l0.1 0.2M318.1 69l0.9 2.8M189.1 55.8l0.2 1.1M152.5 31.6l-0.1 0M308.2 54.4l0 0M163.8 89.2l-1.7 0.1" stroke="#1a1004" stroke-width="9" stroke-linecap="round"/><path d="M309.7 155.7l-0.2 0.6M328.6 133l-0.3 0.2M321 162l0.7 0M199.8 97.6l0.1 1.3M269.9 20.2l2.2 2.4M325.4 37.9l-2 1.5M253 63.2l-1.2 0.7M187.2 88.1l1 0.8M277.9 61.1l0.8 2.2M238.9 44.2l-0.1 2M263.1 79.5l4.2 0.4M231.7 120.2l-0.2 2.8M211.7 30.1l0.4 0.1M257.8 160.2l1.7 1.7M332.1 20.7l1.6 2.1M264.8 141.3l3.4 2.5M194.7 0.2l-1 3.2M223.6 21.9l-0.8 1.8M309.1 167.1l1.1 3.2M291.4 2.1l0 0.3M311.2 189.3l-0.4 1.1M334.4 184.8l0 0.1M153.3 50l-1 1.1M234.1 0.5l0.4 1.4M184.5 0.4l-4.1 2.2M151.5 82.8l-0.4 0.4M162.9 15l-2.8 0.3M283.3 167.4l-2.6 0.4M222.9 4.2l1.7 2" stroke="#1a1004" stroke-width="9.5" stroke-linecap="round"/><path d="M306.4 66.9l1.8 2.9M150.2 19.1l-1.7 2.2M230.9 66.4l-3.2 0.7M286.4 115.2l0.6 3.1M261 7.1l0.2 1M316.7 140.1l-0.1 1.6M245.5 110.3l-1 0.1M134.9 23.7l2.8 1.3M204 78.4l-0.7 0.9M303.1 6.6l1.6 0.5M298 57.4l-0.7 3.9M290.9 139.6l2.7 1.4M256.1 121.8l3.3 2M278.4 41.7l-3.6 2M314.4 178.4l-3.3 2.1M253 -1.1l-2.3 3.5M335.5 89l-2.7 3.8M174.7 29.1l-2.8 3.3" stroke="#1a1004" stroke-width="10" stroke-linecap="round"/><path d="M177.8 52.5l-1 1.9M296.8 44.8l1 0.1M265.8 40.3l-2.4 3.8M172.5 3.1l-1.6 4.2M99 4.3l0.4 0.8M293.6 94.1l2.9 0.4M106.2 16l2.4 4.7M323.5 111.5l2.1 0.4M284 32.8l2 4.4M129.7 44.8l0 1.2M280.2 14.5l1 0.2M121.9 20.7l2.4 1.2M182.8 29.1l4.6 2.1" stroke="#1a1004" stroke-width="10.5" stroke-linecap="round"/><path d="M246 79.8l-0.1 0.1M205.7 64l0.8 1.6" stroke="#1a1004" stroke-width="11" stroke-linecap="round"/><path d="M216.9 205.9h0M221.2 206.5h0M320.6 284.3h0M324.8 269.1h0M228.8 195.5h0M234.3 196.1h0M333 294.6h0M91.6 115.8h0M104.2 128.2h0M178.8 136.2h0M182.2 141h0M34.8 14.4h0M36.4 10.7h0M61.5 68h0M125.2 160.6h0M140.8 123.9h0M145.7 123.5h0M60.8 95.5h0M63.1 92.8h0M253.7 252.2h0M147.6 177.2h0M188.4 182.9h0M192.8 181h0M57.4 85.7h0M129.2 97.8h0M134.1 101.9h0M103.1 150.3h0M134.9 159.3h0M39.7 24.5h0M198.4 199.2h0M330.6 230.6h0M336 232.8h0M156.2 118.7h0M158.1 123.7h0M123.1 107.2h0M126.1 103.4h0M275.3 231.1h0M280.6 230.2h0M167.5 144.7h0M170.1 140.8h0M227.9 206.4h0M113.4 146.2h0M115.2 148.7h0M203.3 228.7h0M217.8 160h0M219.1 155h0M67.9 97.9h0M32.9 31.1h0M98.1 139.9h0M203.9 183.2h0M209 184.5h0M71.4 43.1h0M77.1 42.3h0M70.1 107h0M321.7 231.4h0M324.7 236.9h0M330.8 239.7h0M335.7 241.2h0M154.4 167.2h0M188.5 198.5h0M191.9 197.3h0M25.9 9.6h0M326.3 287.9h0M86.7 109.7h0M87.5 106.2h0M214.5 229.6h0M113.8 99.3h0M114.9 94.2h0M269.3 253.7h0M103.2 94.2h0M107.8 96.7h0M310.4 292.5h0M311.5 289.5h0M241.9 243.6h0M169.3 176.6h0M173.3 179h0M89.5 132.4h0M173.3 191.1h0M101.3 135.7h0M207.7 225.7h0M82.5 57h0M84.8 52.8h0M287.3 284.5h0M91.7 127h0M293.7 260.9h0M297.6 260.1h0M152.5 181.7h0M130.3 172.6h0M326.7 281.4h0M192 211.4h0M53.7 10.7h0M56.8 15.8h0M200.6 176.8h0M204.8 176.8h0M266.1 260.7h0M241.5 251.4h0M244.3 252.2h0M43.6 44.4h0M240.4 186.3h0M245.6 183.2h0" stroke="#2446e8" stroke-width="2" stroke-linecap="round"/><path d="M228.2 15.7h0M236.4 12.3h0M52.7 5.2h0M173.7 18h0M180.3 21.9h0M64.1 81.2h0M328.9 133.4h0M286.7 214.7h0M259.1 109.9h0M124.2 152h0M61.6 51.9h0M304.3 273.9h0M83.4 63.6h0M296 202.3h0M140.7 39.1h0M141.6 30.5h0M199.5 98.2h0M328.4 220.1h0M246.5 235.8h0M301.7 292.1h0M208.8 124.7h0M209.9 131.5h0M246.6 194.5h0M157.6 79.3h0M164.7 75h0M234 166.3h0M83.3 6.7h0M88.1 0.9h0M68.1 57.1h0M303.2 221.4h0M329.2 152h0M292.7 13.7h0M149 10.9h0M155.8 5.7h0M276.7 75.8h0M279.2 83.3h0M211 219.3h0M157.3 63.5h0M161.1 56.2h0M238.1 56.4h0M240.4 63.6h0M303.3 29.5h0M294.1 267.1h0M216.6 64.8h0M219.8 72.5h0M47.3 50h0M214.1 175.5h0M203 9.8h0M159.6 106.7h0M310.2 43.6h0M227.2 104.8h0M233.1 111h0M177.3 146.3h0M125.4 138.9h0M299.1 106.3h0M305.7 105.3h0M86.5 32.5h0M279 140.9h0M264.4 42h0M63.7 23.1h0M171.8 4.8h0M200.4 169.3h0M237.9 24.1h0M246.3 23.2h0M114 157.1h0M328 8.1h0M320.7 190.3h0M327.3 190.3h0M176.8 200.5h0M122.6 95.8h0M99.6 4.6h0M143.8 160.2h0M194.6 140.5h0M245.9 79.4h0M306.3 294.6h0M142.3 86.6h0M270.2 119.3h0M272.4 127.9h0M255.8 27.2h0M263.7 23.8h0M238 190.3h0M313.3 300.1h0M122.6 121.3h0M132.7 129.9h0M278.8 186.1h0M281.5 191h0M295 94.6h0M182.7 189.7h0M131.8 112.9h0M165 179.9h0M285.7 270.3h0M320.6 214.2h0M124.9 52.6h0M126.7 59.7h0M108.3 87.3h0M160.5 157.3h0M182 176.4h0M100 112.8h0M245.1 109.9h0M226.6 236.9h0M53.1 41.9h0M303 184h0M278.3 61.8h0M170.4 87.5h0M177.9 89.2h0M221.3 50.4h0M228.3 46.6h0M321.3 200.9h0M137 145h0M195 23.6h0M202.6 23.2h0M317.5 -3.4h0M319.6 3.8h0M81.7 100.3h0M238.6 45.3h0M75.2 102.6h0M229.2 174.5h0M316.7 61.3h0M320.8 55.2h0M146.1 147.6h0M278 263.1h0M330.5 48.6h0M255.8 246.3h0M76.9 85.3h0M122.2 113.3h0M297.1 154.9h0M54.4 68.4h0M287.1 71.6h0M290.9 65.5h0M240 90.1h0M313.4 120.5h0M131.3 83.1h0M132.7 76.6h0M49.7 68.2h0M210.6 207.7h0M324.3 111.8h0M233.4 229.7h0M108.8 60h0M258.7 160.7h0M227.8 142.8h0M232.8 138.1h0M59.1 35.8h0M163.5 40.5h0M227.9 151.5h0M234.3 152.2h0M291.2 238.4h0M289.6 279.4h0M137.1 152.9h0M197.8 182.9h0M284.7 35.4h0M193.8 2.1h0M223.1 183.3h0M233.5 78.1h0M256.5 195.2h0M98.5 84.5h0M91.7 95.6h0M223.3 23.1h0M162.8 26.8h0M140 180.7h0M279.3 269h0M179.3 158.1h0M81.3 110.1h0M256.9 216.5h0M43.5 18.7h0M163.4 196.4h0M122.8 146.3h0M246.9 95.2h0M249.6 103.3h0M219.9 223.7h0M223.9 232.7h0M168.8 157.1h0M307.6 279.6h0M272.6 242.9h0M309.8 14.2h0M316.9 15.1h0M29 15.4h0M110 -0.3h0M114.9 6.6h0M321.1 301.1h0M136 64.4h0M141.4 58.4h0M54.4 21.3h0M111.8 38.2h0M119 42.5h0M170.7 170.6h0M331.7 265.7h0M302 265h0M68.9 15h0M318.7 289.7h0M249.4 254.1h0M171.7 66.2h0M177.1 70h0M331.9 62.9h0M332.4 71.5h0M163.4 112.9h0M167.1 117.4h0M248.8 170.7h0M254.5 166.4h0M299.1 243.6h0M251.4 206.4h0M36.3 1.6h0M289.8 247.8h0M305.1 250.8h0M214.3 107.4h0M219.1 100.6h0M91.5 122h0M208.7 195.1h0M93.5 68.5h0M333.9 207.8h0M158.1 185.6h0M53.5 77.9h0M266.8 269.7h0M253.7 150.1h0M260.3 149h0M281.7 178.4h0M314.7 225.6h0M204 220.8h0M74.5 51.9h0M315.2 100.7h0M209 -0.4h0M217.1 1.8h0M70.6 64.2h0M158 194.7h0M262.1 239h0M305 286.2h0M281.5 92.2h0M286.9 87.7h0M261.4 224.4h0M291.8 2.1h0M267 217.7h0M134.9 174.5h0M140.1 137.9h0M306 200.2h0M218 117.5h0M184.3 101.8h0M219.3 144.5h0M272.6 178.4h0M110.8 122.9h0M260 258h0M312.4 210.6h0M311.4 189.6h0M206.3 48.1h0M209 55.2h0M92.2 76.8h0M333.8 167.7h0M272.2 263.6h0M132 167.1h0M302.6 130.9h0M311.3 130.6h0M183.3 198.6h0M213.2 199.9h0M157 178h0M292.5 287.4h0M97.1 120.2h0M251.5 50.7h0M256.6 45.2h0M183.3 204.6h0M47.2 59.6h0M312.9 266.8h0M217.5 237.3h0M118.6 160.9h0M287.2 231.8h0M188.1 11h0M191.2 17h0M171.3 204.6h0M97.5 51.9h0M100.4 46.8h0M179.1 207.6h0M23.9 0.7h0M108.7 146.7h0M234.5 223.4h0M122.9 131.9h0M144.2 72.5h0M73.5 97.3h0M85 127.3h0M301.7 280.8h0M114.7 131.6h0M307.7 258.4h0M239.1 236.9h0M276.4 248.5h0M292.4 274h0M334 185.3h0M232.5 212.7h0M225.9 91.9h0M283.9 244.2h0M197 129.1h0M200.7 135.2h0M273.8 271.1h0M212.7 235.2h0M218.3 216.9h0M147.4 102.1h0M233.8 1.3h0M182.3 1.7h0M173.1 163.1h0M285.3 224.2h0M189.3 206.4h0M333.9 287.8h0M225.3 166.2h0M164.3 150.3h0M75.5 115.5h0M60.4 74.7h0M181.6 183.2h0M130 144.7h0M303.1 140.9h0M307.1 146.6h0M66.2 40h0M145.8 184.7h0M297.8 286.4h0M223.9 212.3h0M189.3 56h0M100 144.8h0M239 248.4h0M179 129.6h0M111.8 152.7h0M119.6 153.1h0M148.4 139.5h0M93.1 137.6h0M113 69h0M141.5 174.9h0M139.8 95.9h0M308.3 54.3h0M161.7 14.9h0M226.8 243.6h0M29.6 0.9h0M81.3 116.3h0M132 89.4h0M283.1 251.2h0M268.4 226.4h0M294.4 281.7h0M163 89.6h0M35.1 37.6h0M298.3 275.9h0M324.1 295.7h0M137.4 164.9h0M333.9 36.4h0M334.9 29.8h0M124.7 167.5h0M170.7 110.6h0M176.6 107.8h0M241 229.6h0M282.2 167.5h0M222.5 240.3h0M49.3 74.3h0M132.7 138.3h0M317.9 271.5h0M153.8 192.6h0M264.6 255h0M149.7 164h0" stroke="#2446e8" stroke-width="2.5" stroke-linecap="round"/><path d="M309.7 156.2h0M153.6 93.1h0M281.9 237.2h0M260.5 90h0M186.9 150h0M321.5 162h0M149.5 20.2h0M289.1 191.5h0M194.8 203.6h0M244.1 130.5h0M294.8 128.9h0M92.4 56.9h0M312 242.2h0M271 21.9h0M324.3 175.6h0M179.7 168.6h0M188.7 164.4h0M261.2 7.3h0M297.3 45h0M221.3 191.1h0M316.8 140.9h0M81.7 14h0M242.3 157.1h0M176.9 41.5h0M260.4 177.9h0M252.5 63.6h0M271.1 208.7h0M217.7 82.1h0M277 223.2h0M140.9 49.4h0M274.2 160.5h0M238.8 202.9h0M52.9 52.5h0M104.5 104.4h0M137.9 4.8h0M187.8 88.2h0M157.5 137.8h0M168.4 133.3h0M203.7 79h0M264.8 79.8h0M231.2 121.1h0M242.9 223.4h0M211.7 30.4h0M131.4 122.2h0M196.7 157.2h0M103.2 121.1h0M323 276.4h0M61.4 4.7h0M232.7 183.2h0M209.8 92.1h0M122.5 86.9h0M201.1 191.4h0M332.6 21.8h0M286.8 258.1h0M284.8 52.1h0M84.9 90.1h0M266.8 142.1h0M252.5 34.4h0M176.7 118.7h0M309.7 168.4h0M208.8 138h0M188.9 128.3h0M110.8 49.4h0M334.4 280.8h0M71.6 3.8h0M233.6 243.7h0M178.1 194.7h0M263.1 186.2h0M240.2 176.7h0M297.4 59.1h0M265.5 201.3h0M193.9 174.9h0M213.5 188.8h0M96.4 37.9h0M154.3 149.9h0M320.6 243.1h0M334.7 273.3h0M301.9 211.6h0M126.8 3.1h0M94 103.7h0M246.7 143.5h0M299.1 117.7h0M85.5 43.4h0M256.3 231.9h0M296.7 230.2h0M328.9 298.6h0M122.8 20.9h0M150.2 112.6h0M44.6 3.8h0M249.4 229.4h0M315.6 249.9h0M274.7 0.9h0M185.3 30.1h0M220.8 128.6h0M59.1 44.6h0M332.6 120.7h0M137.8 106.4h0M293 222.6h0M85.9 82.9h0M309.1 233h0M242.1 213.8h0M201.5 148.7h0M251.2 187.8h0M318.7 70.4h0M265.7 170h0M277 214.5h0M258.1 122.4h0M276.7 42.3h0M151.8 83.2h0M287.7 264h0M164.7 164.3h0M312.6 179.2h0M251.8 0.1h0M333.7 90.8h0M292.2 26.1h0M173.5 31.1h0M107.5 111.3h0" stroke="#2446e8" stroke-width="3" stroke-linecap="round"/><path d="M177.6 53.2h0M136.6 24.3h0M107.9 18.8h0M106.9 31.7h0M152.7 50.9h0M152.7 31.2h0" stroke="#2446e8" stroke-width="3.5" stroke-linecap="round"/><path d="M21 0 22.4 3.4 24.5 8.1 26.8 13.8 29 20 30.8 26.7 32.5 34.2 34.4 42.1 37 50 40.3 58.1 44.2 66.4 48.5 74.8 53 83 57.9 91.1 63.1 99.2 68.5 107.2 74 115 79.4 122.7 84.9 130.3 90.7 137.8 97 145 104.2 152.2 112.2 159.3 120 166 127 172 132.9 177.2 138.2 181.7 142.9 185.6 147 189 149.5 191.1 150.8 192.2 152.6 193.7 157 197 165 202.9 175.5 210.6 186.7 218.8 197 226 205.9 232 214.4 237.4 222.7 242.7 231 248 239.3 253.5 247.6 259 255.8 264.5 264 270 271.9 275.5 279.6 281 287.5 286.5 296 292 306.2 298 317.5 304.4 327.8 310 335 314" stroke="#000" stroke-width="5" fill="none" filter="url(#bf)"/></g>
</g>
</svg></div>
<!-- separator -->
<div class="a" style="left:384px;top:411px;width:556px;height:1px;background:#e6e8ec"></div>
<div class="a" style="left:384px;top:412px;width:556px;height:1px;background:#cdd0d6"></div>
<div class="a" style="left:384px;top:413px;width:556px;height:1px;background:#eaecf0"></div>
<!-- bottom panels -->
<div class="a" style="left:385px;top:413px;width:304px;height:105px;border:1px solid #eef0f3;border-right-color:#e8eaee"></div>
<div class="a" style="left:691px;top:413px;width:239px;height:105px;border:1px solid #eef0f3"></div>
<div class="t" style="left:390.5px;top:414.5px;letter-spacing:-0.21px">UV | DAPI (Max Intensity Projection)</div>
<div class="t" style="left:697px;top:414.5px;letter-spacing:-0.21px">Green | dsRed (Max Intensity Projection)</div>
<div class="a" style="left:454px;top:422px"><svg width="168" height="96" viewBox="0 0 168 96">
<defs><filter id="b3" x="0" y="0" width="1" height="1"><feGaussianBlur stdDeviation=".35"/></filter>
<clipPath id="c3"><path d="M0 0 11 0 12.7 3.8 14.9 9.1 17.7 15.2 20.7 21.7 24 27.6 27.4 33.1 31.1 38.7 35.1 44.3 39.4 49.7 44 55 49.2 60.1 54.8 65.2 60.7 70.1 66.6 74.7 72 79 77.4 83.1 82.9 87.1 88.1 90.8 92.5 93.8 95.6 96 0 96Z"/></clipPath></defs>
<rect width="168" height="96" fill="#000"/>
<g filter="url(#b3)" fill="none">
<g clip-path="url(#c3)"><rect width="168" height="96" fill="#030a28"/><path d="M32.4 53.1h0M15.6 22.8h0M19.8 72.3h0M31.8 67.6h0M45.7 80.4h0M16.9 49.7h0M79.7 86.7h0M13.4 57.5h0M1.8 16.2h0M19.2 27.8h0M56.3 79.2h0M25.5 94.2h0M8.6 13.7h0M75.1 89.7h0M3.6 88.7h0M8.1 55.9h0M9.6 59.8h0M4.1 94.4h0M28.2 95.1h0M10 29.2h0M25.2 55.4h0M24.3 33.6h0M51.7 79.3h0M41.6 66.5h0M0.5 69.4h0M44.6 88h0M31.5 82.8h0M17.7 21.5h0M1.7 53.5h0M40.1 73.3h0M49.7 76h0M20.1 79.3h0M73.9 84.7h0M54.1 86.7h0M6.7 32.9h0M11 7.7h0M20.7 52.9h0M29.5 43.7h0M54.2 65.2h0M4.6 72.9h0M77 95.2h0M18.1 91h0M25.9 73.1h0M0.2 38.5h0M10 21h0M37.7 58.2h0M46.7 68.8h0M13.3 20h0M42.9 79.8h0M26.8 82h0M12.4 37.2h0M58 92.6h0M16.6 73.9h0M72.4 91.2h0M24.5 42.8h0M37.1 48h0M21.6 25.2h0M68.9 76.7h0M76.8 83.6h0M5.7 26.1h0M7.7 3.5h0M14.9 70h0M64.3 95h0M21.9 82.7h0M62 76.3h0M10.8 2.6h0M60.1 69.6h0M5.3 41.3h0M51.4 73.2h0M26.6 70.4h0M17.7 16.7h0M83.4 95.2h0M8.9 36.8h0M21.7 49.3h0M7.3 74.8h0M6.1 36.3h0M15.5 33.1h0M40.8 76.4h0M20 43.4h0M71.8 79.2h0M82.2 91h0M63.6 74h0M3.8 22.3h0M17 64.2h0M43.1 73h0M10.3 0.3h0M13.6 73.2h0M30.8 41.9h0" stroke="#2448c0" stroke-width="1.5" stroke-linecap="round"/><path d="M6.9 22h0M43.5 69.4h0M10.7 34.3h0M15.6 16.1h0M43.2 54.1h0M6.9 82.8h0M26.2 36.5h0M38.9 90.1h0M26.5 78.9h0M18.9 66.4h0M19.6 60.5h0M10.6 63.6h0M11.6 16.8h0M0.2 0.1h0M61.4 78.7h0M56.9 86.4h0M14.8 30.6h0M28.7 60.1h0M31.1 86.2h0M40.1 60.4h0M25.4 86.7h0M2.1 79.5h0M32.5 44.5h0M66.2 77.6h0M55.4 90.8h0M11.1 42.2h0M17.4 39.2h0M22.7 27.8h0M11.6 14h0M63.6 92.2h0M15.4 77.4h0M0.7 6.4h0M29.1 89.5h0M22.6 71.2h0M21.9 35.4h0M41.3 58h0M53.2 68.9h0M45.2 64.7h0M33.5 76.7h0M2.8 35.4h0M20.5 75.9h0M79.8 91.6h0M23.8 59.3h0M4.4 69.8h0M34.9 72.3h0M0.4 92.9h0M46.2 62.2h0M10.1 82.1h0M31.7 92.3h0M12.8 48.2h0M54.8 76.6h0M16.2 19.6h0M28.9 66.1h0M41.8 88.1h0M43.2 83.8h0M19.5 86.4h0M37.9 50.2h0M21.6 31.1h0M6.8 58.4h0M50 70.6h0M7 45.6h0M2.8 46.3h0M30 75.2h0M20.4 93h0M36.9 60.9h0M13.1 23.3h0M3.4 38.2h0M13.5 44.6h0M58.2 95.8h0M58.7 75.8h0M28.5 38.2h0M2 3.1h0M49.6 61h0M12.6 86.7h0M27.7 42.3h0M34.7 91.5h0M37.8 93.8h0M9 50.3h0M1.1 90.2h0M12.5 4.3h0M63.3 80.6h0M4.4 17.2h0M37.7 71.1h0M16.7 58.6h0M19.3 57.4h0M58.8 72.7h0M7.8 95h0" stroke="#2448c0" stroke-width="2" stroke-linecap="round"/><path d="M14.2 66.5h0M32.9 55.7h0M70.1 94.3h0M29.4 56.9h0M39 52.2h0M25.9 40.5h0M29.5 80.6h0M7.9 65.2h0M21.4 40.7h0M8 39.9h0M15 95.1h0M52.9 93.6h0M41 92h0M11.6 90.2h0M5.7 11.1h0M56 68h0M84 92.5h0M4.5 76.7h0M10.2 76.2h0M15.5 61.4h0M18.8 34.6h0M58.1 83.8h0M2.8 43.2h0M30.4 39.3h0M61.2 86.1h0M65.8 80.8h0M27.1 47.8h0M9.2 9.5h0M13.3 10.6h0M39 68.5h0M15.4 36.6h0M23.2 62.7h0M4 64.4h0M69.1 78.9h0M0.1 74.4h0M89.7 92.5h0M19 30.2h0M60.7 82.2h0M18 69.6h0M35.8 66.5h0M66.3 89.6h0M5.8 29.9h0M23.6 77.9h0M25.8 45.2h0M27.2 50.6h0M65.8 75.5h0M10 26.1h0M65.1 85.9h0M71.9 81.3h0M62 71.5h0M17 55.7h0M4.4 5.6h0M24.5 90h0M37 74.7h0M32.2 40.3h0M44.3 75.8h0M77.2 86.8h0M32.9 95h0M36.1 54.9h0M18.5 23.8h0M87.6 91.2h0M3.5 57.8h0M6.6 48.9h0M22.6 85.7h0M12.2 31.3h0M34.6 63.4h0M52.6 89.1h0M7.8 86.9h0M42.5 94.7h0M28 34.7h0M45.4 56.7h0M55.3 70.5h0M8 1.1h0M78.1 89.5h0M66.9 93.1h0M52.2 63.2h0M0.6 63.9h0M75.6 82h0M61.5 94.3h0M18.9 18.7h0" stroke="#3a68e8" stroke-width="1.5" stroke-linecap="round"/><path d="M7.4 6.1h0M15.7 52.8h0M2.1 31.4h0M33.3 60.7h0M22.5 95.9h0M22.2 55.7h0M69.1 89.2h0M2.7 13.1h0M13.9 83.9h0M17.3 45h0M35.2 52.3h0M14 40.9h0M23.4 51.9h0M40.9 63.7h0M10.6 95.4h0M13.6 7.9h0M2.2 61.2h0M90.8 94.7h0M35.8 88.5h0M18.4 95.5h0M49.9 65h0M39.6 54.4h0M4.2 51.9h0M21.1 46.6h0M69 86.1h0M0.5 82.5h0M21.5 90h0M1.5 26.7h0M5.3 14.7h0M30.2 70.5h0M15.1 27h0M83.2 88.5h0M0.2 49h0M4.9 86h0M55.7 73.6h0M1.1 10.2h0M31.2 62.7h0M86.2 95.9h0M4.9 2.8h0M10.1 5h0M69.3 82.9h0M17.1 83.3h0M0.9 85.8h0M31.9 50.1h0M20.5 22.7h0M6.2 79.4h0M60 88.6h0M46.3 72.3h0M2.3 19.6h0M43.7 90.7h0M25.9 61.8h0M0.1 42.3h0M7.4 18.6h0M23.4 37.6h0M34.7 86h0M8.1 62.3h0M71.6 84.2h0M53.8 82.1h0M33 47.1h0M87.7 93.4h0M10.4 66.5h0M19.4 37.3h0M14.6 91.1h0M24.4 30.4h0M14.1 80.8h0M33.7 80.6h0M43.3 59.5h0M73.3 95.3h0M10.2 44.9h0M16.4 13.5h0" stroke="#3a68e8" stroke-width="2" stroke-linecap="round"/></g>
<path d="M131 55.1h0M58.6 16h0M133.4 90.8h0M97.2 21.5h0M76.5 53h0M164.8 49.5h0M80 40.9h0M55.9 2.4h0M114.3 49h0M101.1 40.4h0M160 41.7h0M57.5 7.7h0M125.8 58.5h0M47.4 27.7h0M54.4 13.6h0M90.7 40h0M120 85.2h0M143.5 88.7h0M167.1 42.5h0M130.4 45.7h0M137.9 56.1h0M130 1.9h0M107.1 10.6h0M142.7 38.3h0M163.6 17.1h0M46.8 9.6h0M112.2 39.8h0M155.9 4h0M143.9 48.6h0M81.3 14.7h0M130.9 35h0M97.7 35.6h0M122.2 23.7h0M140 62.2h0M106.6 54.8h0M164.2 61.4h0M114.8 12.4h0M128.3 80.5h0M148.1 21.1h0M68.7 3.4h0M78.3 28.4h0M90.9 19h0M165.6 29.3h0M158.5 93.8h0M65.7 44.5h0M98.3 62.3h0M86.6 11.7h0M153.1 77.1h0M137.7 69.8h0M126.6 41.2h0M113.6 70.1h0M167.1 8.3h0M96.3 46.7h0M149.4 62h0M132.4 20.6h0M120.1 1.6h0M76.6 35.6h0M154.8 68.8h0M88 57.7h0M67.2 50.9h0M163.3 69.4h0M115.1 60.9h0M140.8 75.1h0M143.8 95.6h0M75 56.9h0M57.4 21.3h0M65.9 24.3h0M81.6 23.7h0M87.5 68.9h0M56 37.2h0M137.6 10.7h0M76.3 22h0M66.6 38.7h0M52.9 8.6h0M119.8 69.6h0M103.3 4.9h0M152.8 12.9h0M132.8 29.1h0M112.7 29.1h0M153.6 50.8h0M72.4 40.8h0M137 35.1h0M136 2.8h0M137.1 82.8h0M83.9 44.8h0M149 44.2h0M126 88.2h0M141.6 20.3h0M120.3 55.5h0M102.4 23.1h0M62.4 42.2h0M75 47.7h0M69.6 19.3h0M145.2 31.7h0M150.9 93.1h0M96.4 52.5h0M88.7 35h0M123.7 74.4h0M96.9 11.5h0M52.3 26.3h0M41.5 0.3h0M44.9 14h0M31.2 1.8h0M166.9 89.3h0M87.8 63.2h0M67.6 34.3h0M153.4 39.1h0M61.8 35.5h0M77.5 61.8h0M156.1 21.2h0M158.8 55h0M70.9 55.6h0M51.3 1h0M86.7 22.4h0M82.1 60.1h0M56.3 29h0M60.2 25.4h0M77.9 8.2h0M82.2 56.3h0M113.7 7h0M165.2 0.9h0M49.9 15.9h0M165.8 95.8h0M52.9 22.4h0M160.3 75.9h0M63.6 8.6h0M36 1.2h0M58.5 41.6h0M159.7 26.9h0M165.4 36h0M149.9 7.6h0M109 75.2h0M107 86.1h0M91.6 12.5h0M110.8 23.9h0M95 69.8h0" stroke="#4068d8" stroke-width="1.5" stroke-linecap="round"/><path d="M82.8 34.7h0M116.7 78.1h0M120.5 49.5h0M165.4 80.9h0M45.4 19.2h0M46 3.2h0M147.9 68.3h0M143.5 5.7h0M89.8 27.8h0M110.4 18h0M131.1 72.1h0M71.1 27.4h0M111.1 1.6h0M95.6 74.5h0M70.2 45.1h0M91.2 48.2h0M143.5 14.7h0M117.4 18.1h0M35.5 6.2h0M63.1 3.2h0M150.3 28.5h0M151.3 84.6h0M137.3 41.5h0M41.4 18h0M108.8 66.7h0M94 5.7h0M111.1 80.7h0M144.7 80.3h0M49.1 24.1h0M119.1 32.9h0M91.9 65.5h0M93.7 57.8h0M50 20h0M106.5 29.1h0M128.7 64.8h0M111.3 88.3h0M104.9 46.3h0M95.6 0.1h0M85.3 3.4h0M52.5 31h0M63.3 47.5h0M91.7 73.4h0M117.6 91.2h0M120 94.9h0M125.3 6.7h0M158.4 33.3h0M103.1 74.6h0M105.2 82.8h0M103.1 16.2h0M158.6 82.8h0M40.4 5h0M125.8 17.7h0M85.9 52h0M119.8 9.5h0M72.4 9.6h0M116.5 43.4h0M77.2 3.1h0M75.8 16.4h0M155.9 62.4h0M59 32.2h0M83.6 67h0M97.7 27.1h0M40.5 13.3h0M64.5 15.8h0M63.5 29.8h0M101.5 79.1h0M125.6 31.8h0M105.5 61.8h0M115.1 86.3h0M150.5 1.2h0M104.7 35.7h0M127.8 94h0M130.8 8.1h0M99.9 68.9h0M69.7 14.3h0M140.3 28.2h0M42.6 8.1h0M114.2 55.2h0M38.1 9.4h0M147.7 55.7h0M72 51.6h0M137.5 47.8h0M167.4 55.4h0" stroke="#4068d8" stroke-width="2" stroke-linecap="round"/>
</g>
</svg></div>
<div class="a" style="left:760px;top:422px"><svg width="168" height="96" viewBox="0 0 168 96">
<defs><filter id="b4" x="0" y="0" width="1" height="1"><feGaussianBlur stdDeviation=".35"/></filter><filter id="bf2"><feGaussianBlur stdDeviation="1"/></filter><linearGradient id="dg" x1="0" y1="0" x2="1" y2="1"><stop offset="0" stop-color="#f4a820"/><stop offset=".5" stop-color="#dc920e"/><stop offset="1" stop-color="#c07c08"/></linearGradient>
<clipPath id="c4"><path d="M23.9 0 28 5.6 33.8 13.6 40.6 22.8 47.9 32.1 55 40.4 62.1 47.7 69.6 54.7 77.2 61.4 84.8 67.7 92 73.5 99.4 79 107.1 84.3 114.4 89.1 120.6 93.1 125 96 168 96 168 0Z"/></clipPath></defs>
<rect width="168" height="96" fill="#000"/>
<g filter="url(#b4)" clip-path="url(#c4)" fill="none"><rect width="168" height="96" fill="url(#dg)"/><path d="M63.5 27.3l-0.6 0.9M116.9 86.8l-1.3 0.6" stroke="#6a4006" stroke-width="3" stroke-linecap="round"/><path d="M141.6 1.9l1.4 0.7M143.3 -1.8l1.4 0.7" stroke="#6a4006" stroke-width="3.5" stroke-linecap="round"/><path d="M66.8 17.7l-0.2 0.2" stroke="#6a4006" stroke-width="4" stroke-linecap="round"/><path d="M130.2 59.3l-1.4 1.6" stroke="#6a4006" stroke-width="4.5" stroke-linecap="round"/><path d="M166.7 81.1l-0.1 0M135.4 52.1l-0.5 2.4" stroke="#6a4006" stroke-width="5.5" stroke-linecap="round"/><path d="M157.9 59.8l-1.5 0.9" stroke="#6a4006" stroke-width="6.5" stroke-linecap="round"/><path d="M40.9 19.9l-0.6 0.3M41.8 21.6l-0.6 0.3" stroke="#1a0e00" stroke-width="1.5" stroke-linecap="round"/><path d="M95.5 50.8l0.1 0.1M97.3 48.4l0.1 0.1M36.6 8.3l0.1 0M87 60l-0.6 0.9M54.6 27.3l-0.1 0.1M103.9 80.1l0 0.3M81.6 47.9l1.3 0.1M81.7 45.3l1.3 0.1M46.1 18l-0.7 0.8M28.6 1.5l0.9 0.6M61.6 36.1l0.1 0.5M49.2 31.4l0.9 0.4M108.9 82.3l0.5 0.2M59.3 40.5l-0.2 0.7M86.9 67l-0.6 0M57.9 36.9l-0.1 0.9M77.6 56.5l-0.5 0M100.1 77.5l0 0M50.7 23.3l-0.8 0.1M34.4 4l-0.1 0M113.7 82.4l-0.1 0.1M73.5 55.5l0.4 0.3M37.6 12.6l-0.1 0M130 95.4l0 0.8M112 86.5l0.3 0.1M72.3 48.4l0.2 0.7M46.4 27.7l-0.2 0M104.5 75.9l-0.3 0.1M74.6 51.3l0.3 1.1M25.8 -0.6l0.1 1.2M118.7 82.5l-0.6 1M33.9 11l0.6 0.4M77.6 60.4l0.5 0.1M63.5 46.8l0.6 0.9" stroke="#1a0e00" stroke-width="2.5" stroke-linecap="round"/><path d="M62 7.7l0.4 0.2M63.9 4.7l0.4 0.2M60.6 17.5l-1 0.4M40.9 2.2l-0.2 0.4M70.1 28.3l0.8 0.9M72.5 26.2l0.8 0.9M122.5 81.4l0.1 0.4M93.6 21.3l-1.2 0.6M95.1 24.3l-1.2 0.6M43.7 11l0.1 0.5M122.7 76.2l-0.5 0.9M121.3 89l-0.1 0M72.6 41.5l0.7 1M75.1 39.8l0.7 1M32.7 7.5l0.1 0M40.8 16.6l0.3 0.2M73 32.4l0 0M92.1 67.8l-0.4 0.4M33 0l0.5 0.6M81.3 56.3l-0.1 0.1M45.7 22.6l0.3 0.4M150 87.1l0.1 0.3M153.4 86.4l0.1 0.3M66.3 39.4l0.5 0.1M84.8 43.4l0.2 0.6M87.9 42.5l0.2 0.6M47.8 5.1l-0.2 0.9M112 56.5l1.9 0.5M112.8 53.3l1.9 0.5M102.2 72.4l-0.4 0.8M81.7 61.6l-0.8 1M110.2 67l0.1 0.4M113.3 66.2l0.1 0.4M68.3 47.7l0.1 0.9M55.1 34l0.8 0.2M100.6 51.9l-0.1 1M103.7 52.2l-0.1 1M65.1 43.1l-0.4 0.3M97.2 73l0.4 0.5M135.1 91.7l-1.2 0.2M125.3 87.6l0.9 0.5M50.1 27.8l0 0.1M77.5 47.4l-0.4 0.8M70.5 53.4l0.4 0.2M89.8 63l-0.8 1.1M128.9 90.4l-0.6 1.4M56.6 20.7l-0.1 0.7M124.7 92.5l0.4 1.3M67.6 22.6l-0.7 0.8M57.8 10.4l0.3 0.1M49.5 10l0 0M63.4 33l1.5 0.2M135.6 95.5l1.1 0.1M60.6 44.2l0.8 0.2M58.5 25.6l-0.2 0.1M60 31.1l0 0M84.4 50l0.7 1M93.3 72.2l0.2 0.3M101.7 68.3l0.2 0.7" stroke="#1a0e00" stroke-width="3" stroke-linecap="round"/><path d="M140.4 91.6l0.3 1.3M101.6 57.6l1.7 0.5M56.1 4.7l-0.3 1.3M155.4 94.1l0 0.2M51.3 2.7l0.2 0.5M70.4 37.4l0 0M130.7 76.4l-0.9 1.1M49.1 14l0 0.7M149.9 45.1l-0.7 1.4M153.4 46.7l-0.7 1.4M133.6 81.8l0 0M144.8 80.5l0.3 0.2M147.3 77.8l0.3 0.2M116.1 78.2l-1 0M90.3 40.5l1 0.3M42.4 6.9l0 0.7M93.6 63.3l1.4 0.2M78.4 30.7l0.1 0.3M91.9 56.7l1.4 0.5M132.8 86.9l-0.8 1.1M108.6 75l0.9 1.4M85.2 54.6l1.6 0.4M107.8 54.4l-0.3 0.2M105.9 67.8l0.9 0.1M161.5 92.3l0 0M76.1 25.7l0.3 1.2M52.9 17.5l0 0.1M88.1 47.3l1 0.5M146.4 93.3l0 0M61.8 22l-1.2 0.3M97.9 66.1l-0.5 0.7M46.4 0.9l0 0M69.9 44l0.1 0.2M68 30.7l0.7 0.6M79.8 51.6l-0.3 0M137.6 85.6l0.7 1.5M111.3 71.6l-0.7 0.4M128.7 82.3l-0.1 0.2M96.9 58.6l-0.1 1.2M76.1 36.7l0.6 1.2M144.7 39.1l0.1 2M148.7 38.9l0.1 2M101.3 33.2l-1.6 1.1M103.5 36.4l-1.6 1.1M150.7 95.6l-0.6 0.5M165.9 61.1l0 0.3M170 61.2l0 0.3" stroke="#1a0e00" stroke-width="3.5" stroke-linecap="round"/><path d="M81.8 25.2l-0.9 0.1M121.2 55l0.5 0.2M67.3 12.3l-1.5 0.1M101.7 62.7l0 0.2M150.3 66.5l0 0M153.1 63l0 0M160.3 84.6l-1.4 1.4M128.5 70.1l-0.3 0.3M156.8 27.2l0.1 1.6M161.1 26.9l0.1 1.6M101.3 40.5l0.2 1.4M107 37.8l-0.5 1.3M80 10.1l-1.5 0.4M85.7 34.3l1.3 1.1M105.8 47.2l0.3 0.9M143.2 86.4l-0.1 0.4M123.5 10.6l1.9 0.8M125.2 6.3l1.9 0.8M121.4 69.5l1.7 0.2M108.6 61.7l0 0.6M124 61.2l-0.2 0.7M79.1 41.5l-0.2 1.2M115.8 70.9l1 0M72.8 21.4l-1.2 1.4M53 12.4l0.7 0.1M134.6 6.7l-1.4 0.4M135.9 10.8l-1.4 0.4M82.2 15l0.7 1.2M60.5 0.4l-0.9 1.1M143 65.1l1.3 0.4M144.2 60.6l1.3 0.4M78.6 20.9l-0.5 0.1M85.5 28.5l1.2 1.2M151.6 80.4l1.5 1.2M91 52.7l-1.7 0.2M102.7 6.5l-0.1 0.4M106.8 8l-0.1 0.4M80.3 35.2l1.4 0.2M111.5 49.2l0.3 0M168 94.9l0 1" stroke="#1a0e00" stroke-width="4" stroke-linecap="round"/><path d="M116.3 43.6l-1.8 0.7M91.4 11l0.1 0.1M71 4.9l1.4 1.5M87 4.8l1.1 0.3M116.9 15.9l2 1M118.9 11.6l2 1M136.1 63.4l0.5 1.1M102.6 21.8l-0.4 1.6M116.9 59.4l-0.1 0.4M139.1 77.9l-0.9 0.3M93.6 33.4l-0.5 0.8M162.3 45.4l-1.2 0.1M162.7 50.3l-1.2 0.1M74.6 16.7l-1 0.7M138.2 70.9l1.3 1.7M95.8 41.8l0.6 0.3M73 11.2l0 0.4M117.4 63.9l-0.1 2.1" stroke="#1a0e00" stroke-width="4.5" stroke-linecap="round"/><path d="M112.5 22.3l0.4 0.5M117 31l0 0M154.6 37.5l-1.3 0M121.3 48.1l0.4 0.2M110.5 1.8l-0.8 2.1M89.2 18.8l-1 1.8M145.6 68.9l0.1 1.8M126.1 17.5l-0.6 1.7M142.5 7.8l0.7 1.7M120.3 23.2l1.4 1.4M107.9 32.3l-0.2 0.4M68.9 -0.3l-0.1 1.1M129.5 43.6l-1.3 1.8M99.1 28.8l0.4 1.2M157.4 19.7l0.6 0.8M96.8 1.5l1.4 1.4M155.1 75.5l0.2 0M78.6 0.7l-0.1 0.1M167.2 88l-1.5 0.7M97.1 14.3l-0.4 0.1M132.3 15.6l1 0.9M141.5 27.3l-0.1 0.8M156.3 52l-0.4 0.3" stroke="#1a0e00" stroke-width="5" stroke-linecap="round"/><path d="M148.3 23l-1.9 0.5M162.8 75.1l-0.8 0.9M165.7 19.1l1.6 2.3M125.5 35.3l-1.3 1.7M135.2 33.1l0.4 0.1M131.6 -1l-0.9 2.4M149.4 6.4l0.6 1.1M105.8 15.5l-1.6 1.1M119.1 -0.1l0.5 0.7M161.4 54.8l2.2 1.6M167.8 30.9l-1.1 1M113.9 8.3l0.3 0.9M126.8 52.3l0.4 0.3M113 36.3l1.2 2.3M154.3 13l0 0.1M168.1 50.9l-0.2 0.1" stroke="#1a0e00" stroke-width="5.5" stroke-linecap="round"/><path d="M140.7 48.7l1 0.7M129.6 23.9l-0.9 2.6M161.4 8.5l-0.2 0.5M165.7 40l1.9 1.1M140 40.6l-0.2 0.3M146.2 55.5l-2 1M147.1 15.3l1.9 1M148.5 31.4l-1.6 0.4M162.4 65.3l1 2M159.4 1.9l0.4 0.5M167.7 1.8l0.1 1.1M161.9 35.4l-1.5 0.1M152.3 -0.8l0.5 2.2M112 15l-0.1 1.5" stroke="#1a0e00" stroke-width="6" stroke-linecap="round"/><path d="M139.5 19.3l-0.7 1.1M167.4 12.6l-0.7 0.5" stroke="#1a0e00" stroke-width="6.5" stroke-linecap="round"/><path d="M23.9 0 28 5.6 33.8 13.6 40.6 22.8 47.9 32.1 55 40.4 62.1 47.7 69.6 54.7 77.2 61.4 84.8 67.7 92 73.5 99.4 79 107.1 84.3 114.4 89.1 120.6 93.1 125 96" stroke="#201000" stroke-width="3" filter="url(#bf2)"/></g>
</svg></div>
<div class="a" style="left:384px;top:518px;width:556px;height:1px;background:#f0f2f4"></div>
<div class="a" style="left:384px;top:519px;width:556px;height:1px;background:#dadde2"></div>
<div class="a" style="left:384px;top:520px;width:556px;height:1px;background:#c4c7cc"></div>
<div class="a" style="left:384px;top:521px;width:556px;height:1px;background:#6e7178"></div>
</body></html>
